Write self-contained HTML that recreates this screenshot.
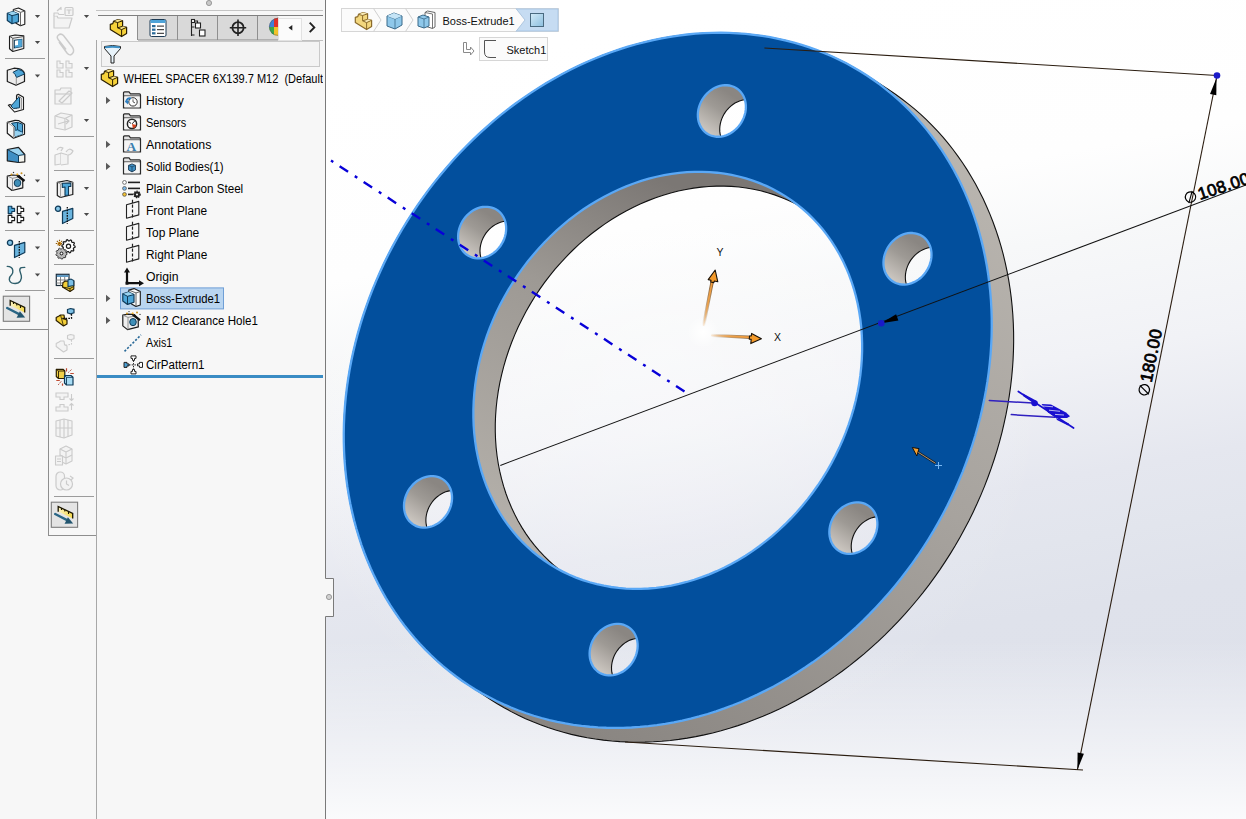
<!DOCTYPE html>
<html><head><meta charset="utf-8"><style>
html,body{margin:0;padding:0;}
body{width:1246px;height:819px;overflow:hidden;position:relative;background:#f7f7f7;font-family:"Liberation Sans",sans-serif;}
svg{position:absolute;left:0;top:0;}
</style></head><body>
<svg width="1246" height="819">
<defs>
<linearGradient id="bg0" gradientUnits="userSpaceOnUse" x1="786.0" y1="0.0" x2="942.3" y2="886.3"><stop offset="0" stop-color="#ffffff"/><stop offset="0.22" stop-color="#fefefe"/><stop offset="0.315" stop-color="#f7f8f9"/><stop offset="0.445" stop-color="#f1f2f6"/><stop offset="0.575" stop-color="#e5e7ef"/><stop offset="0.645" stop-color="#e2e5ed"/><stop offset="0.72" stop-color="#dfe2eb"/><stop offset="1" stop-color="#dde0ea"/></linearGradient>
<linearGradient id="bg1" gradientUnits="userSpaceOnUse" x1="0" y1="640" x2="0" y2="819"><stop offset="0" stop-color="#ffffff" stop-opacity="0"/><stop offset="1" stop-color="#ffffff" stop-opacity="0.85"/></linearGradient>
<radialGradient id="bg2" gradientUnits="userSpaceOnUse" cx="660" cy="370" r="400"><stop offset="0" stop-color="#ffffff" stop-opacity="0.42"/><stop offset="0.5" stop-color="#ffffff" stop-opacity="0.2"/><stop offset="1" stop-color="#ffffff" stop-opacity="0"/></radialGradient>
<pattern id="bg" patternUnits="userSpaceOnUse" x="0" y="0" width="1246" height="819"><rect width="1246" height="819" fill="url(#bg0)"/><rect width="1246" height="819" fill="url(#bg1)"/><rect width="1246" height="819" fill="url(#bg2)"/></pattern>
<linearGradient id="rim" gradientUnits="userSpaceOnUse" x1="1000" y1="100" x2="600" y2="740"><stop offset="0" stop-color="#bdb9b3"/><stop offset="0.5" stop-color="#a7a39e"/><stop offset="1" stop-color="#8a8682"/></linearGradient>
<linearGradient id="bore" gradientUnits="userSpaceOnUse" x1="640" y1="170" x2="470" y2="540"><stop offset="0" stop-color="#7b7774"/><stop offset="0.35" stop-color="#9d9994"/><stop offset="1" stop-color="#b6b2ac"/></linearGradient>
<clipPath id="vp"><rect x="326" y="0" width="920" height="819"/></clipPath>
<clipPath id="cin"><path d="M709.59,172.11 L717.01,172.73 L724.35,173.67 L731.61,174.93 L738.77,176.50 L745.82,178.39 L752.75,180.59 L759.55,183.10 L766.21,185.91 L772.71,189.03 L779.06,192.44 L785.23,196.13 L791.22,200.12 L797.02,204.37 L802.62,208.91 L808.01,213.70 L813.19,218.75 L818.14,224.05 L822.86,229.60 L827.34,235.37 L831.58,241.37 L835.56,247.58 L839.28,254.00 L842.74,260.61 L845.93,267.41 L848.85,274.38 L851.48,281.51 L853.84,288.80 L855.90,296.23 L857.68,303.79 L859.16,311.46 L860.35,319.24 L861.24,327.12 L861.83,335.08 L862.12,343.10 L862.12,351.19 L861.81,359.32 L861.20,367.48 L860.30,375.66 L859.10,383.85 L857.60,392.04 L855.81,400.20 L853.73,408.34 L851.37,416.43 L848.72,424.46 L845.79,432.43 L842.59,440.32 L839.12,448.12 L835.38,455.81 L831.39,463.38 L827.14,470.83 L822.65,478.14 L817.92,485.29 L812.95,492.29 L807.77,499.11 L802.36,505.75 L796.75,512.19 L790.94,518.43 L784.94,524.46 L778.76,530.27 L772.41,535.84 L765.90,541.18 L759.24,546.27 L752.43,551.10 L745.49,555.67 L738.44,559.97 L731.28,563.99 L724.01,567.72 L716.66,571.17 L709.24,574.33 L701.75,577.18 L694.21,579.74 L686.63,581.98 L679.02,583.91 L671.39,585.53 L663.76,586.84 L656.13,587.82 L648.52,588.49 L640.94,588.83 L633.40,588.85 L625.91,588.55 L618.49,587.93 L611.15,586.99 L603.89,585.73 L596.73,584.16 L589.68,582.27 L582.75,580.07 L575.95,577.56 L569.29,574.75 L562.79,571.63 L556.44,568.22 L550.27,564.53 L544.28,560.54 L538.48,556.29 L532.88,551.75 L527.49,546.96 L522.31,541.91 L517.36,536.61 L512.64,531.06 L508.16,525.29 L503.92,519.29 L499.94,513.08 L496.22,506.66 L492.76,500.05 L489.57,493.25 L486.65,486.28 L484.02,479.15 L481.66,471.86 L479.60,464.43 L477.82,456.87 L476.34,449.20 L475.15,441.42 L474.26,433.54 L473.67,425.58 L473.38,417.56 L473.38,409.47 L473.69,401.34 L474.30,393.18 L475.20,385.00 L476.40,376.81 L477.90,368.62 L479.69,360.46 L481.77,352.32 L484.13,344.23 L486.78,336.20 L489.71,328.23 L492.91,320.34 L496.38,312.54 L500.12,304.85 L504.11,297.28 L508.36,289.83 L512.85,282.52 L517.58,275.37 L522.55,268.37 L527.73,261.55 L533.14,254.91 L538.75,248.47 L544.56,242.23 L550.56,236.20 L556.74,230.39 L563.09,224.82 L569.60,219.48 L576.26,214.39 L583.07,209.56 L590.01,204.99 L597.06,200.69 L604.22,196.67 L611.49,192.94 L618.84,189.49 L626.26,186.33 L633.75,183.48 L641.29,180.92 L648.87,178.68 L656.48,176.75 L664.11,175.13 L671.74,173.82 L679.37,172.84 L686.98,172.17 L694.56,171.83 L702.10,171.81Z"/></clipPath>
<clipPath id="ch0"><path d="M727.04,85.24 L729.32,85.50 L731.52,86.02 L733.63,86.77 L735.63,87.75 L737.50,88.96 L739.21,90.38 L740.76,92.00 L742.13,93.80 L743.30,95.77 L744.26,97.89 L745.01,100.13 L745.54,102.47 L745.84,104.90 L745.90,107.38 L745.74,109.91 L745.34,112.44 L744.72,114.95 L743.88,117.43 L742.83,119.85 L741.58,122.18 L740.13,124.40 L738.51,126.50 L736.73,128.44 L734.81,130.22 L732.76,131.81 L730.61,133.20 L728.37,134.38 L726.07,135.33 L723.73,136.05 L721.37,136.53 L719.02,136.76 L716.69,136.74 L714.42,136.47 L712.21,135.96 L710.10,135.21 L708.10,134.22 L706.24,133.02 L704.52,131.59 L702.97,129.98 L701.61,128.17 L700.44,126.21 L699.47,124.09 L698.72,121.85 L698.20,119.51 L697.90,117.08 L697.83,114.59 L697.99,112.07 L698.39,109.54 L699.01,107.02 L699.85,104.55 L700.90,102.13 L702.16,99.80 L703.60,97.57 L705.22,95.48 L707.00,93.53 L708.92,91.76 L710.97,90.16 L713.12,88.77 L715.36,87.60 L717.66,86.64 L720.00,85.93 L722.36,85.45 L724.71,85.22Z"/></clipPath>
<linearGradient id="hg0" gradientUnits="userSpaceOnUse" x1="725.9" y1="91.0" x2="701.9" y2="127.0"><stop offset="0" stop-color="#8a8682"/><stop offset="0.45" stop-color="#9e9a95"/><stop offset="1" stop-color="#c9c4be"/></linearGradient>
<clipPath id="ch1"><path d="M912.66,233.02 L914.93,233.29 L917.14,233.80 L919.25,234.55 L921.25,235.54 L923.11,236.74 L924.83,238.17 L926.38,239.78 L927.74,241.59 L928.91,243.55 L929.88,245.67 L930.63,247.91 L931.15,250.25 L931.45,252.68 L931.52,255.17 L931.36,257.69 L930.96,260.22 L930.34,262.74 L929.50,265.22 L928.45,267.63 L927.19,269.96 L925.75,272.19 L924.13,274.28 L922.35,276.23 L920.43,278.00 L918.38,279.60 L916.23,280.99 L913.99,282.16 L911.69,283.12 L909.35,283.83 L906.99,284.31 L904.64,284.54 L902.31,284.52 L900.03,284.26 L897.83,283.74 L895.72,282.99 L893.72,282.01 L891.85,280.80 L890.14,279.38 L888.59,277.76 L887.22,275.96 L886.05,273.99 L885.09,271.87 L884.34,269.63 L883.81,267.29 L883.51,264.86 L883.45,262.38 L883.61,259.86 L884.01,257.32 L884.63,254.81 L885.47,252.33 L886.52,249.91 L887.77,247.58 L889.22,245.36 L890.84,243.26 L892.62,241.32 L894.54,239.54 L896.59,237.95 L898.74,236.56 L900.98,235.38 L903.28,234.43 L905.62,233.71 L907.98,233.23 L910.33,233.00Z"/></clipPath>
<linearGradient id="hg1" gradientUnits="userSpaceOnUse" x1="911.5" y1="238.8" x2="887.5" y2="274.8"><stop offset="0" stop-color="#8a8682"/><stop offset="0.45" stop-color="#9e9a95"/><stop offset="1" stop-color="#c9c4be"/></linearGradient>
<clipPath id="ch2"><path d="M858.54,502.36 L860.82,502.63 L863.02,503.14 L865.13,503.89 L867.13,504.88 L869.00,506.09 L870.71,507.51 L872.26,509.13 L873.63,510.93 L874.80,512.90 L875.76,515.01 L876.51,517.25 L877.04,519.60 L877.34,522.02 L877.40,524.51 L877.24,527.03 L876.84,529.56 L876.22,532.08 L875.38,534.56 L874.33,536.97 L873.08,539.30 L871.63,541.53 L870.01,543.62 L868.23,545.57 L866.31,547.35 L864.26,548.94 L862.11,550.33 L859.87,551.51 L857.57,552.46 L855.23,553.18 L852.87,553.65 L850.52,553.88 L848.19,553.86 L845.92,553.60 L843.71,553.09 L841.60,552.33 L839.60,551.35 L837.74,550.14 L836.02,548.72 L834.47,547.10 L833.11,545.30 L831.94,543.33 L830.97,541.22 L830.22,538.98 L829.70,536.63 L829.40,534.20 L829.33,531.72 L829.49,529.20 L829.89,526.67 L830.51,524.15 L831.35,521.67 L832.40,519.25 L833.66,516.92 L835.10,514.70 L836.72,512.60 L838.50,510.66 L840.42,508.88 L842.47,507.29 L844.62,505.90 L846.86,504.72 L849.16,503.77 L851.50,503.05 L853.86,502.58 L856.21,502.35Z"/></clipPath>
<linearGradient id="hg2" gradientUnits="userSpaceOnUse" x1="857.4" y1="508.1" x2="833.4" y2="544.1"><stop offset="0" stop-color="#8a8682"/><stop offset="0.45" stop-color="#9e9a95"/><stop offset="1" stop-color="#c9c4be"/></linearGradient>
<clipPath id="ch3"><path d="M618.81,623.92 L621.08,624.19 L623.29,624.70 L625.40,625.45 L627.40,626.44 L629.26,627.64 L630.98,629.07 L632.53,630.68 L633.89,632.49 L635.06,634.45 L636.03,636.57 L636.78,638.81 L637.30,641.15 L637.60,643.58 L637.67,646.07 L637.51,648.59 L637.11,651.12 L636.49,653.64 L635.65,656.11 L634.60,658.53 L633.34,660.86 L631.90,663.09 L630.28,665.18 L628.50,667.13 L626.58,668.90 L624.53,670.50 L622.38,671.89 L620.14,673.06 L617.84,674.02 L615.50,674.73 L613.14,675.21 L610.79,675.44 L608.46,675.42 L606.18,675.16 L603.98,674.64 L601.87,673.89 L599.87,672.91 L598.00,671.70 L596.29,670.28 L594.74,668.66 L593.37,666.86 L592.20,664.89 L591.24,662.77 L590.49,660.53 L589.96,658.19 L589.66,655.76 L589.60,653.28 L589.76,650.75 L590.16,648.22 L590.78,645.71 L591.62,643.23 L592.67,640.81 L593.92,638.48 L595.37,636.26 L596.99,634.16 L598.77,632.22 L600.69,630.44 L602.74,628.85 L604.89,627.46 L607.13,626.28 L609.43,625.33 L611.77,624.61 L614.13,624.13 L616.48,623.90Z"/></clipPath>
<linearGradient id="hg3" gradientUnits="userSpaceOnUse" x1="617.6" y1="629.7" x2="593.6" y2="665.7"><stop offset="0" stop-color="#8a8682"/><stop offset="0.45" stop-color="#9e9a95"/><stop offset="1" stop-color="#c9c4be"/></linearGradient>
<clipPath id="ch4"><path d="M433.19,476.14 L435.47,476.40 L437.67,476.92 L439.78,477.67 L441.78,478.65 L443.65,479.86 L445.36,481.28 L446.91,482.90 L448.28,484.70 L449.45,486.67 L450.41,488.79 L451.16,491.03 L451.69,493.37 L451.99,495.80 L452.05,498.28 L451.89,500.80 L451.49,503.34 L450.87,505.85 L450.03,508.33 L448.98,510.75 L447.73,513.08 L446.28,515.30 L444.66,517.40 L442.88,519.34 L440.96,521.12 L438.91,522.71 L436.76,524.10 L434.52,525.28 L432.22,526.23 L429.88,526.95 L427.52,527.43 L425.17,527.66 L422.84,527.64 L420.57,527.37 L418.36,526.86 L416.25,526.11 L414.25,525.12 L412.39,523.92 L410.67,522.49 L409.12,520.88 L407.76,519.07 L406.59,517.11 L405.62,514.99 L404.87,512.75 L404.35,510.41 L404.05,507.98 L403.98,505.49 L404.14,502.97 L404.54,500.44 L405.16,497.92 L406.00,495.44 L407.05,493.03 L408.31,490.70 L409.75,488.47 L411.37,486.38 L413.15,484.43 L415.07,482.66 L417.12,481.06 L419.27,479.67 L421.51,478.50 L423.81,477.54 L426.15,476.83 L428.51,476.35 L430.86,476.12Z"/></clipPath>
<linearGradient id="hg4" gradientUnits="userSpaceOnUse" x1="432.0" y1="481.9" x2="408.0" y2="517.9"><stop offset="0" stop-color="#8a8682"/><stop offset="0.45" stop-color="#9e9a95"/><stop offset="1" stop-color="#c9c4be"/></linearGradient>
<clipPath id="ch5"><path d="M487.31,206.80 L489.58,207.06 L491.79,207.57 L493.90,208.33 L495.90,209.31 L497.76,210.52 L499.48,211.94 L501.03,213.56 L502.39,215.36 L503.56,217.33 L504.53,219.44 L505.28,221.68 L505.80,224.03 L506.10,226.46 L506.17,228.94 L506.01,231.46 L505.61,233.99 L504.99,236.51 L504.15,238.99 L503.10,241.41 L501.84,243.74 L500.40,245.96 L498.78,248.06 L497.00,250.00 L495.08,251.78 L493.03,253.37 L490.88,254.76 L488.64,255.94 L486.34,256.89 L484.00,257.61 L481.64,258.08 L479.29,258.31 L476.96,258.30 L474.68,258.03 L472.48,257.52 L470.37,256.77 L468.37,255.78 L466.50,254.57 L464.79,253.15 L463.24,251.53 L461.87,249.73 L460.70,247.76 L459.74,245.65 L458.99,243.41 L458.46,241.06 L458.16,238.64 L458.10,236.15 L458.26,233.63 L458.66,231.10 L459.28,228.58 L460.12,226.10 L461.17,223.69 L462.42,221.36 L463.87,219.13 L465.49,217.04 L467.27,215.09 L469.19,213.31 L471.24,211.72 L473.39,210.33 L475.63,209.15 L477.93,208.20 L480.27,207.48 L482.63,207.01 L484.98,206.78Z"/></clipPath>
<linearGradient id="hg5" gradientUnits="userSpaceOnUse" x1="486.1" y1="212.5" x2="462.1" y2="248.5"><stop offset="0" stop-color="#8a8682"/><stop offset="0.45" stop-color="#9e9a95"/><stop offset="1" stop-color="#c9c4be"/></linearGradient>
</defs>
<g clip-path="url(#vp)">
<rect x="326" y="0" width="920" height="819" fill="url(#bg)"/>
<path d="M343.75,433.40 L343.92,424.39 L344.32,415.35 L344.94,406.29 L345.78,397.20 L346.84,388.11 L348.12,379.01 L349.61,369.91 L351.33,360.82 L353.27,351.74 L355.41,342.69 L357.78,333.65 L360.35,324.65 L363.14,315.69 L366.13,306.77 L369.34,297.90 L372.74,289.09 L376.35,280.35 L380.16,271.67 L384.17,263.06 L388.37,254.53 L392.76,246.10 L397.34,237.75 L402.10,229.50 L407.05,221.35 L412.17,213.32 L417.47,205.39 L422.95,197.59 L428.59,189.91 L434.39,182.37 L440.36,174.96 L446.48,167.69 L452.75,160.56 L459.17,153.59 L465.73,146.77 L472.43,140.11 L479.26,133.62 L486.23,127.29 L493.31,121.14 L500.52,115.17 L507.84,109.38 L515.27,103.77 L522.81,98.35 L530.45,93.13 L538.18,88.10 L545.99,83.28 L553.89,78.65 L561.87,74.24 L569.93,70.03 L578.05,66.04 L586.23,62.26 L594.46,58.70 L602.75,55.36 L611.08,52.24 L619.45,49.35 L627.86,46.68 L636.29,44.25 L644.74,42.04 L653.21,40.07 L661.68,38.32 L670.17,36.82 L678.65,35.55 L687.12,34.51 L695.58,33.71 L704.02,33.15 L712.44,32.83 L720.82,32.74 L729.17,32.90 L737.48,33.29 L745.74,33.92 L753.94,34.79 L762.09,35.89 L770.17,37.23 L778.18,38.81 L786.12,40.61 L793.97,42.66 L801.74,44.93 L809.42,47.43 L817.00,50.16 L824.47,53.12 L831.84,56.30 L839.10,59.71 L846.24,63.33 L853.26,67.17 L860.15,71.23 L866.91,75.50 L888.81,89.80 L895.43,94.27 L901.91,98.95 L908.25,103.84 L914.43,108.92 L920.46,114.20 L926.34,119.68 L932.05,125.34 L937.59,131.18 L942.97,137.21 L948.17,143.41 L953.19,149.78 L958.04,156.33 L962.70,163.03 L967.17,169.89 L971.45,176.91 L975.54,184.08 L979.43,191.39 L983.13,198.84 L986.62,206.43 L989.91,214.14 L993.00,221.98 L995.87,229.94 L998.54,238.01 L1001.00,246.18 L1003.24,254.46 L1005.26,262.83 L1007.07,271.30 L1008.67,279.85 L1010.04,288.48 L1011.19,297.18 L1012.13,305.94 L1012.84,314.77 L1013.33,323.65 L1013.60,332.58 L1013.65,341.56 L1013.48,350.57 L1013.08,359.61 L1012.46,368.67 L1011.62,377.76 L1010.56,386.85 L1009.28,395.95 L1007.79,405.05 L1006.07,414.14 L1004.13,423.22 L1001.99,432.27 L999.62,441.31 L997.05,450.31 L994.26,459.27 L991.27,468.19 L988.06,477.06 L984.66,485.87 L981.05,494.61 L977.24,503.29 L973.23,511.90 L969.03,520.43 L964.64,528.86 L960.06,537.21 L955.30,545.46 L950.35,553.61 L945.23,561.64 L939.93,569.57 L934.45,577.37 L928.81,585.05 L923.01,592.59 L917.04,600.00 L910.92,607.27 L904.65,614.40 L898.23,621.37 L891.67,628.19 L884.97,634.85 L878.14,641.34 L871.17,647.67 L864.09,653.82 L856.88,659.79 L849.56,665.58 L842.13,671.19 L834.59,676.61 L826.95,681.83 L819.22,686.86 L811.41,691.68 L803.51,696.31 L795.53,700.72 L787.47,704.93 L779.35,708.92 L771.17,712.70 L762.94,716.26 L754.65,719.60 L746.32,722.72 L737.95,725.61 L729.54,728.28 L721.11,730.71 L712.66,732.92 L704.19,734.89 L695.72,736.64 L687.23,738.14 L678.75,739.41 L670.28,740.45 L661.82,741.25 L653.38,741.81 L644.96,742.13 L636.58,742.22 L628.23,742.06 L619.92,741.67 L611.66,741.04 L603.46,740.17 L595.31,739.07 L587.23,737.73 L579.22,736.15 L571.28,734.35 L563.43,732.30 L555.66,730.03 L547.98,727.53 L540.40,724.80 L532.93,721.84 L525.56,718.66 L518.30,715.25 L511.16,711.63 L504.14,707.79 L497.25,703.73 L490.49,699.46 L468.59,685.16 L461.97,680.69 L455.49,676.01 L449.15,671.12 L442.97,666.04 L436.94,660.76 L431.06,655.28 L425.35,649.62 L419.81,643.78 L414.43,637.75 L409.23,631.55 L404.21,625.18 L399.36,618.63 L394.70,611.93 L390.23,605.07 L385.95,598.05 L381.86,590.88 L377.97,583.57 L374.27,576.12 L370.78,568.53 L367.49,560.82 L364.40,552.98 L361.53,545.02 L358.86,536.95 L356.40,528.78 L354.16,520.50 L352.14,512.13 L350.33,503.66 L348.73,495.11 L347.36,486.48 L346.21,477.78 L345.27,469.02 L344.56,460.19 L344.07,451.31 L343.80,442.38Z" fill="url(#rim)" stroke="#111" stroke-width="1.1"/>
<path d="M737.48,33.29 L745.74,33.92 L753.94,34.79 L762.09,35.89 L770.17,37.23 L778.18,38.81 L786.12,40.61 L793.97,42.66 L801.74,44.93 L809.42,47.43 L817.00,50.16 L824.47,53.12 L831.84,56.30 L839.10,59.71 L846.24,63.33 L853.26,67.17 L860.15,71.23 L866.91,75.50 L873.53,79.97 L880.01,84.65 L886.35,89.54 L892.53,94.62 L898.56,99.90 L904.44,105.38 L910.15,111.04 L915.69,116.88 L921.07,122.91 L926.27,129.11 L931.29,135.48 L936.14,142.03 L940.80,148.73 L945.27,155.59 L949.55,162.61 L953.64,169.78 L957.53,177.09 L961.23,184.54 L964.72,192.13 L968.01,199.84 L971.10,207.68 L973.97,215.64 L976.64,223.71 L979.10,231.88 L981.34,240.16 L983.36,248.53 L985.17,257.00 L986.77,265.55 L988.14,274.18 L989.29,282.88 L990.23,291.64 L990.94,300.47 L991.43,309.35 L991.70,318.28 L991.75,327.26 L991.58,336.27 L991.18,345.31 L990.56,354.37 L989.72,363.46 L988.66,372.55 L987.38,381.65 L985.89,390.75 L984.17,399.84 L982.23,408.92 L980.09,417.97 L977.72,427.01 L975.15,436.01 L972.36,444.97 L969.37,453.89 L966.16,462.76 L962.76,471.57 L959.15,480.31 L955.34,488.99 L951.33,497.60 L947.13,506.13 L942.74,514.56 L938.16,522.91 L933.40,531.16 L928.45,539.31 L923.33,547.34 L918.03,555.27 L912.55,563.07 L906.91,570.75 L901.11,578.29 L895.14,585.70 L889.02,592.97 L882.75,600.10 L876.33,607.07 L869.77,613.89 L863.07,620.55 L856.24,627.04 L849.27,633.37 L842.19,639.52 L834.98,645.49 L827.66,651.28 L820.23,656.89 L812.69,662.31 L805.05,667.53 L797.32,672.56 L789.51,677.38 L781.61,682.01 L773.63,686.42 L765.57,690.63 L757.45,694.62 L749.27,698.40 L741.04,701.96 L732.75,705.30 L724.42,708.42 L716.05,711.31 L707.64,713.98 L699.21,716.41 L690.76,718.62 L682.29,720.59 L673.82,722.34 L665.33,723.84 L656.85,725.11 L648.38,726.15 L639.92,726.95 L631.48,727.51 L623.06,727.83 L614.68,727.92 L606.33,727.76 L598.02,727.37 L589.76,726.74 L581.56,725.87 L573.41,724.77 L565.33,723.43 L557.32,721.85 L549.38,720.05 L541.53,718.00 L533.76,715.73 L526.08,713.23 L518.50,710.50 L511.03,707.54 L503.66,704.36 L496.40,700.95 L489.26,697.33 L482.24,693.49 L475.35,689.43 L468.59,685.16 L461.97,680.69 L455.49,676.01 L449.15,671.12 L442.97,666.04 L436.94,660.76 L431.06,655.28 L425.35,649.62 L419.81,643.78 L414.43,637.75 L409.23,631.55 L404.21,625.18 L399.36,618.63 L394.70,611.93 L390.23,605.07 L385.95,598.05 L381.86,590.88 L377.97,583.57 L374.27,576.12 L370.78,568.53 L367.49,560.82 L364.40,552.98 L361.53,545.02 L358.86,536.95 L356.40,528.78 L354.16,520.50 L352.14,512.13 L350.33,503.66 L348.73,495.11 L347.36,486.48 L346.21,477.78 L345.27,469.02 L344.56,460.19 L344.07,451.31 L343.80,442.38 L343.75,433.40 L343.92,424.39 L344.32,415.35 L344.94,406.29 L345.78,397.20 L346.84,388.11 L348.12,379.01 L349.61,369.91 L351.33,360.82 L353.27,351.74 L355.41,342.69 L357.78,333.65 L360.35,324.65 L363.14,315.69 L366.13,306.77 L369.34,297.90 L372.74,289.09 L376.35,280.35 L380.16,271.67 L384.17,263.06 L388.37,254.53 L392.76,246.10 L397.34,237.75 L402.10,229.50 L407.05,221.35 L412.17,213.32 L417.47,205.39 L422.95,197.59 L428.59,189.91 L434.39,182.37 L440.36,174.96 L446.48,167.69 L452.75,160.56 L459.17,153.59 L465.73,146.77 L472.43,140.11 L479.26,133.62 L486.23,127.29 L493.31,121.14 L500.52,115.17 L507.84,109.38 L515.27,103.77 L522.81,98.35 L530.45,93.13 L538.18,88.10 L545.99,83.28 L553.89,78.65 L561.87,74.24 L569.93,70.03 L578.05,66.04 L586.23,62.26 L594.46,58.70 L602.75,55.36 L611.08,52.24 L619.45,49.35 L627.86,46.68 L636.29,44.25 L644.74,42.04 L653.21,40.07 L661.68,38.32 L670.17,36.82 L678.65,35.55 L687.12,34.51 L695.58,33.71 L704.02,33.15 L712.44,32.83 L720.82,32.74 L729.17,32.90ZM709.59,172.11 L717.01,172.73 L724.35,173.67 L731.61,174.93 L738.77,176.50 L745.82,178.39 L752.75,180.59 L759.55,183.10 L766.21,185.91 L772.71,189.03 L779.06,192.44 L785.23,196.13 L791.22,200.12 L797.02,204.37 L802.62,208.91 L808.01,213.70 L813.19,218.75 L818.14,224.05 L822.86,229.60 L827.34,235.37 L831.58,241.37 L835.56,247.58 L839.28,254.00 L842.74,260.61 L845.93,267.41 L848.85,274.38 L851.48,281.51 L853.84,288.80 L855.90,296.23 L857.68,303.79 L859.16,311.46 L860.35,319.24 L861.24,327.12 L861.83,335.08 L862.12,343.10 L862.12,351.19 L861.81,359.32 L861.20,367.48 L860.30,375.66 L859.10,383.85 L857.60,392.04 L855.81,400.20 L853.73,408.34 L851.37,416.43 L848.72,424.46 L845.79,432.43 L842.59,440.32 L839.12,448.12 L835.38,455.81 L831.39,463.38 L827.14,470.83 L822.65,478.14 L817.92,485.29 L812.95,492.29 L807.77,499.11 L802.36,505.75 L796.75,512.19 L790.94,518.43 L784.94,524.46 L778.76,530.27 L772.41,535.84 L765.90,541.18 L759.24,546.27 L752.43,551.10 L745.49,555.67 L738.44,559.97 L731.28,563.99 L724.01,567.72 L716.66,571.17 L709.24,574.33 L701.75,577.18 L694.21,579.74 L686.63,581.98 L679.02,583.91 L671.39,585.53 L663.76,586.84 L656.13,587.82 L648.52,588.49 L640.94,588.83 L633.40,588.85 L625.91,588.55 L618.49,587.93 L611.15,586.99 L603.89,585.73 L596.73,584.16 L589.68,582.27 L582.75,580.07 L575.95,577.56 L569.29,574.75 L562.79,571.63 L556.44,568.22 L550.27,564.53 L544.28,560.54 L538.48,556.29 L532.88,551.75 L527.49,546.96 L522.31,541.91 L517.36,536.61 L512.64,531.06 L508.16,525.29 L503.92,519.29 L499.94,513.08 L496.22,506.66 L492.76,500.05 L489.57,493.25 L486.65,486.28 L484.02,479.15 L481.66,471.86 L479.60,464.43 L477.82,456.87 L476.34,449.20 L475.15,441.42 L474.26,433.54 L473.67,425.58 L473.38,417.56 L473.38,409.47 L473.69,401.34 L474.30,393.18 L475.20,385.00 L476.40,376.81 L477.90,368.62 L479.69,360.46 L481.77,352.32 L484.13,344.23 L486.78,336.20 L489.71,328.23 L492.91,320.34 L496.38,312.54 L500.12,304.85 L504.11,297.28 L508.36,289.83 L512.85,282.52 L517.58,275.37 L522.55,268.37 L527.73,261.55 L533.14,254.91 L538.75,248.47 L544.56,242.23 L550.56,236.20 L556.74,230.39 L563.09,224.82 L569.60,219.48 L576.26,214.39 L583.07,209.56 L590.01,204.99 L597.06,200.69 L604.22,196.67 L611.49,192.94 L618.84,189.49 L626.26,186.33 L633.75,183.48 L641.29,180.92 L648.87,178.68 L656.48,176.75 L664.11,175.13 L671.74,173.82 L679.37,172.84 L686.98,172.17 L694.56,171.83 L702.10,171.81ZM727.04,85.24 L729.32,85.50 L731.52,86.02 L733.63,86.77 L735.63,87.75 L737.50,88.96 L739.21,90.38 L740.76,92.00 L742.13,93.80 L743.30,95.77 L744.26,97.89 L745.01,100.13 L745.54,102.47 L745.84,104.90 L745.90,107.38 L745.74,109.91 L745.34,112.44 L744.72,114.95 L743.88,117.43 L742.83,119.85 L741.58,122.18 L740.13,124.40 L738.51,126.50 L736.73,128.44 L734.81,130.22 L732.76,131.81 L730.61,133.20 L728.37,134.38 L726.07,135.33 L723.73,136.05 L721.37,136.53 L719.02,136.76 L716.69,136.74 L714.42,136.47 L712.21,135.96 L710.10,135.21 L708.10,134.22 L706.24,133.02 L704.52,131.59 L702.97,129.98 L701.61,128.17 L700.44,126.21 L699.47,124.09 L698.72,121.85 L698.20,119.51 L697.90,117.08 L697.83,114.59 L697.99,112.07 L698.39,109.54 L699.01,107.02 L699.85,104.55 L700.90,102.13 L702.16,99.80 L703.60,97.57 L705.22,95.48 L707.00,93.53 L708.92,91.76 L710.97,90.16 L713.12,88.77 L715.36,87.60 L717.66,86.64 L720.00,85.93 L722.36,85.45 L724.71,85.22ZM912.66,233.02 L914.93,233.29 L917.14,233.80 L919.25,234.55 L921.25,235.54 L923.11,236.74 L924.83,238.17 L926.38,239.78 L927.74,241.59 L928.91,243.55 L929.88,245.67 L930.63,247.91 L931.15,250.25 L931.45,252.68 L931.52,255.17 L931.36,257.69 L930.96,260.22 L930.34,262.74 L929.50,265.22 L928.45,267.63 L927.19,269.96 L925.75,272.19 L924.13,274.28 L922.35,276.23 L920.43,278.00 L918.38,279.60 L916.23,280.99 L913.99,282.16 L911.69,283.12 L909.35,283.83 L906.99,284.31 L904.64,284.54 L902.31,284.52 L900.03,284.26 L897.83,283.74 L895.72,282.99 L893.72,282.01 L891.85,280.80 L890.14,279.38 L888.59,277.76 L887.22,275.96 L886.05,273.99 L885.09,271.87 L884.34,269.63 L883.81,267.29 L883.51,264.86 L883.45,262.38 L883.61,259.86 L884.01,257.32 L884.63,254.81 L885.47,252.33 L886.52,249.91 L887.77,247.58 L889.22,245.36 L890.84,243.26 L892.62,241.32 L894.54,239.54 L896.59,237.95 L898.74,236.56 L900.98,235.38 L903.28,234.43 L905.62,233.71 L907.98,233.23 L910.33,233.00ZM858.54,502.36 L860.82,502.63 L863.02,503.14 L865.13,503.89 L867.13,504.88 L869.00,506.09 L870.71,507.51 L872.26,509.13 L873.63,510.93 L874.80,512.90 L875.76,515.01 L876.51,517.25 L877.04,519.60 L877.34,522.02 L877.40,524.51 L877.24,527.03 L876.84,529.56 L876.22,532.08 L875.38,534.56 L874.33,536.97 L873.08,539.30 L871.63,541.53 L870.01,543.62 L868.23,545.57 L866.31,547.35 L864.26,548.94 L862.11,550.33 L859.87,551.51 L857.57,552.46 L855.23,553.18 L852.87,553.65 L850.52,553.88 L848.19,553.86 L845.92,553.60 L843.71,553.09 L841.60,552.33 L839.60,551.35 L837.74,550.14 L836.02,548.72 L834.47,547.10 L833.11,545.30 L831.94,543.33 L830.97,541.22 L830.22,538.98 L829.70,536.63 L829.40,534.20 L829.33,531.72 L829.49,529.20 L829.89,526.67 L830.51,524.15 L831.35,521.67 L832.40,519.25 L833.66,516.92 L835.10,514.70 L836.72,512.60 L838.50,510.66 L840.42,508.88 L842.47,507.29 L844.62,505.90 L846.86,504.72 L849.16,503.77 L851.50,503.05 L853.86,502.58 L856.21,502.35ZM618.81,623.92 L621.08,624.19 L623.29,624.70 L625.40,625.45 L627.40,626.44 L629.26,627.64 L630.98,629.07 L632.53,630.68 L633.89,632.49 L635.06,634.45 L636.03,636.57 L636.78,638.81 L637.30,641.15 L637.60,643.58 L637.67,646.07 L637.51,648.59 L637.11,651.12 L636.49,653.64 L635.65,656.11 L634.60,658.53 L633.34,660.86 L631.90,663.09 L630.28,665.18 L628.50,667.13 L626.58,668.90 L624.53,670.50 L622.38,671.89 L620.14,673.06 L617.84,674.02 L615.50,674.73 L613.14,675.21 L610.79,675.44 L608.46,675.42 L606.18,675.16 L603.98,674.64 L601.87,673.89 L599.87,672.91 L598.00,671.70 L596.29,670.28 L594.74,668.66 L593.37,666.86 L592.20,664.89 L591.24,662.77 L590.49,660.53 L589.96,658.19 L589.66,655.76 L589.60,653.28 L589.76,650.75 L590.16,648.22 L590.78,645.71 L591.62,643.23 L592.67,640.81 L593.92,638.48 L595.37,636.26 L596.99,634.16 L598.77,632.22 L600.69,630.44 L602.74,628.85 L604.89,627.46 L607.13,626.28 L609.43,625.33 L611.77,624.61 L614.13,624.13 L616.48,623.90ZM433.19,476.14 L435.47,476.40 L437.67,476.92 L439.78,477.67 L441.78,478.65 L443.65,479.86 L445.36,481.28 L446.91,482.90 L448.28,484.70 L449.45,486.67 L450.41,488.79 L451.16,491.03 L451.69,493.37 L451.99,495.80 L452.05,498.28 L451.89,500.80 L451.49,503.34 L450.87,505.85 L450.03,508.33 L448.98,510.75 L447.73,513.08 L446.28,515.30 L444.66,517.40 L442.88,519.34 L440.96,521.12 L438.91,522.71 L436.76,524.10 L434.52,525.28 L432.22,526.23 L429.88,526.95 L427.52,527.43 L425.17,527.66 L422.84,527.64 L420.57,527.37 L418.36,526.86 L416.25,526.11 L414.25,525.12 L412.39,523.92 L410.67,522.49 L409.12,520.88 L407.76,519.07 L406.59,517.11 L405.62,514.99 L404.87,512.75 L404.35,510.41 L404.05,507.98 L403.98,505.49 L404.14,502.97 L404.54,500.44 L405.16,497.92 L406.00,495.44 L407.05,493.03 L408.31,490.70 L409.75,488.47 L411.37,486.38 L413.15,484.43 L415.07,482.66 L417.12,481.06 L419.27,479.67 L421.51,478.50 L423.81,477.54 L426.15,476.83 L428.51,476.35 L430.86,476.12ZM487.31,206.80 L489.58,207.06 L491.79,207.57 L493.90,208.33 L495.90,209.31 L497.76,210.52 L499.48,211.94 L501.03,213.56 L502.39,215.36 L503.56,217.33 L504.53,219.44 L505.28,221.68 L505.80,224.03 L506.10,226.46 L506.17,228.94 L506.01,231.46 L505.61,233.99 L504.99,236.51 L504.15,238.99 L503.10,241.41 L501.84,243.74 L500.40,245.96 L498.78,248.06 L497.00,250.00 L495.08,251.78 L493.03,253.37 L490.88,254.76 L488.64,255.94 L486.34,256.89 L484.00,257.61 L481.64,258.08 L479.29,258.31 L476.96,258.30 L474.68,258.03 L472.48,257.52 L470.37,256.77 L468.37,255.78 L466.50,254.57 L464.79,253.15 L463.24,251.53 L461.87,249.73 L460.70,247.76 L459.74,245.65 L458.99,243.41 L458.46,241.06 L458.16,238.64 L458.10,236.15 L458.26,233.63 L458.66,231.10 L459.28,228.58 L460.12,226.10 L461.17,223.69 L462.42,221.36 L463.87,219.13 L465.49,217.04 L467.27,215.09 L469.19,213.31 L471.24,211.72 L473.39,210.33 L475.63,209.15 L477.93,208.20 L480.27,207.48 L482.63,207.01 L484.98,206.78Z" fill="#024f9d" fill-rule="evenodd"/>
<g clip-path="url(#cin)"><path d="M709.59,172.11 L717.01,172.73 L724.35,173.67 L731.61,174.93 L738.77,176.50 L745.82,178.39 L752.75,180.59 L759.55,183.10 L766.21,185.91 L772.71,189.03 L779.06,192.44 L785.23,196.13 L791.22,200.12 L797.02,204.37 L802.62,208.91 L808.01,213.70 L813.19,218.75 L818.14,224.05 L822.86,229.60 L827.34,235.37 L831.58,241.37 L835.56,247.58 L839.28,254.00 L842.74,260.61 L845.93,267.41 L848.85,274.38 L851.48,281.51 L853.84,288.80 L855.90,296.23 L857.68,303.79 L859.16,311.46 L860.35,319.24 L861.24,327.12 L861.83,335.08 L862.12,343.10 L862.12,351.19 L861.81,359.32 L861.20,367.48 L860.30,375.66 L859.10,383.85 L857.60,392.04 L855.81,400.20 L853.73,408.34 L851.37,416.43 L848.72,424.46 L845.79,432.43 L842.59,440.32 L839.12,448.12 L835.38,455.81 L831.39,463.38 L827.14,470.83 L822.65,478.14 L817.92,485.29 L812.95,492.29 L807.77,499.11 L802.36,505.75 L796.75,512.19 L790.94,518.43 L784.94,524.46 L778.76,530.27 L772.41,535.84 L765.90,541.18 L759.24,546.27 L752.43,551.10 L745.49,555.67 L738.44,559.97 L731.28,563.99 L724.01,567.72 L716.66,571.17 L709.24,574.33 L701.75,577.18 L694.21,579.74 L686.63,581.98 L679.02,583.91 L671.39,585.53 L663.76,586.84 L656.13,587.82 L648.52,588.49 L640.94,588.83 L633.40,588.85 L625.91,588.55 L618.49,587.93 L611.15,586.99 L603.89,585.73 L596.73,584.16 L589.68,582.27 L582.75,580.07 L575.95,577.56 L569.29,574.75 L562.79,571.63 L556.44,568.22 L550.27,564.53 L544.28,560.54 L538.48,556.29 L532.88,551.75 L527.49,546.96 L522.31,541.91 L517.36,536.61 L512.64,531.06 L508.16,525.29 L503.92,519.29 L499.94,513.08 L496.22,506.66 L492.76,500.05 L489.57,493.25 L486.65,486.28 L484.02,479.15 L481.66,471.86 L479.60,464.43 L477.82,456.87 L476.34,449.20 L475.15,441.42 L474.26,433.54 L473.67,425.58 L473.38,417.56 L473.38,409.47 L473.69,401.34 L474.30,393.18 L475.20,385.00 L476.40,376.81 L477.90,368.62 L479.69,360.46 L481.77,352.32 L484.13,344.23 L486.78,336.20 L489.71,328.23 L492.91,320.34 L496.38,312.54 L500.12,304.85 L504.11,297.28 L508.36,289.83 L512.85,282.52 L517.58,275.37 L522.55,268.37 L527.73,261.55 L533.14,254.91 L538.75,248.47 L544.56,242.23 L550.56,236.20 L556.74,230.39 L563.09,224.82 L569.60,219.48 L576.26,214.39 L583.07,209.56 L590.01,204.99 L597.06,200.69 L604.22,196.67 L611.49,192.94 L618.84,189.49 L626.26,186.33 L633.75,183.48 L641.29,180.92 L648.87,178.68 L656.48,176.75 L664.11,175.13 L671.74,173.82 L679.37,172.84 L686.98,172.17 L694.56,171.83 L702.10,171.81Z" fill="url(#bore)"/><path d="M731.49,186.41 L738.91,187.03 L746.25,187.97 L753.51,189.23 L760.67,190.80 L767.72,192.69 L774.65,194.89 L781.45,197.40 L788.11,200.21 L794.61,203.33 L800.96,206.74 L807.13,210.43 L813.12,214.42 L818.92,218.67 L824.52,223.21 L829.91,228.00 L835.09,233.05 L840.04,238.35 L844.76,243.90 L849.24,249.67 L853.48,255.67 L857.46,261.88 L861.18,268.30 L864.64,274.91 L867.83,281.71 L870.75,288.68 L873.38,295.81 L875.74,303.10 L877.80,310.53 L879.58,318.09 L881.06,325.76 L882.25,333.54 L883.14,341.42 L883.73,349.38 L884.02,357.40 L884.02,365.49 L883.71,373.62 L883.10,381.78 L882.20,389.96 L881.00,398.15 L879.50,406.34 L877.71,414.50 L875.63,422.64 L873.27,430.73 L870.62,438.76 L867.69,446.73 L864.49,454.62 L861.02,462.42 L857.28,470.11 L853.29,477.68 L849.04,485.13 L844.55,492.44 L839.82,499.59 L834.85,506.59 L829.67,513.41 L824.26,520.05 L818.65,526.49 L812.84,532.73 L806.84,538.76 L800.66,544.57 L794.31,550.14 L787.80,555.48 L781.14,560.57 L774.33,565.40 L767.39,569.97 L760.34,574.27 L753.18,578.29 L745.91,582.02 L738.56,585.47 L731.14,588.63 L723.65,591.48 L716.11,594.04 L708.53,596.28 L700.92,598.21 L693.29,599.83 L685.66,601.14 L678.03,602.12 L670.42,602.79 L662.84,603.13 L655.30,603.15 L647.81,602.85 L640.39,602.23 L633.05,601.29 L625.79,600.03 L618.63,598.46 L611.58,596.57 L604.65,594.37 L597.85,591.86 L591.19,589.05 L584.69,585.93 L578.34,582.52 L572.17,578.83 L566.18,574.84 L560.38,570.59 L554.78,566.05 L549.39,561.26 L544.21,556.21 L539.26,550.91 L534.54,545.36 L530.06,539.59 L525.82,533.59 L521.84,527.38 L518.12,520.96 L514.66,514.35 L511.47,507.55 L508.55,500.58 L505.92,493.45 L503.56,486.16 L501.50,478.73 L499.72,471.17 L498.24,463.50 L497.05,455.72 L496.16,447.84 L495.57,439.88 L495.28,431.86 L495.28,423.77 L495.59,415.64 L496.20,407.48 L497.10,399.30 L498.30,391.11 L499.80,382.92 L501.59,374.76 L503.67,366.62 L506.03,358.53 L508.68,350.50 L511.61,342.53 L514.81,334.64 L518.28,326.84 L522.02,319.15 L526.01,311.58 L530.26,304.13 L534.75,296.82 L539.48,289.67 L544.45,282.67 L549.63,275.85 L555.04,269.21 L560.65,262.77 L566.46,256.53 L572.46,250.50 L578.64,244.69 L584.99,239.12 L591.50,233.78 L598.16,228.69 L604.97,223.86 L611.91,219.29 L618.96,214.99 L626.12,210.97 L633.39,207.24 L640.74,203.79 L648.16,200.63 L655.65,197.78 L663.19,195.22 L670.77,192.98 L678.38,191.05 L686.01,189.43 L693.64,188.12 L701.27,187.14 L708.88,186.47 L716.46,186.13 L724.00,186.11Z" fill="url(#bg)" stroke="#111" stroke-width="1.1"/></g>
<g clip-path="url(#ch0)"><path d="M727.04,85.24 L729.32,85.50 L731.52,86.02 L733.63,86.77 L735.63,87.75 L737.50,88.96 L739.21,90.38 L740.76,92.00 L742.13,93.80 L743.30,95.77 L744.26,97.89 L745.01,100.13 L745.54,102.47 L745.84,104.90 L745.90,107.38 L745.74,109.91 L745.34,112.44 L744.72,114.95 L743.88,117.43 L742.83,119.85 L741.58,122.18 L740.13,124.40 L738.51,126.50 L736.73,128.44 L734.81,130.22 L732.76,131.81 L730.61,133.20 L728.37,134.38 L726.07,135.33 L723.73,136.05 L721.37,136.53 L719.02,136.76 L716.69,136.74 L714.42,136.47 L712.21,135.96 L710.10,135.21 L708.10,134.22 L706.24,133.02 L704.52,131.59 L702.97,129.98 L701.61,128.17 L700.44,126.21 L699.47,124.09 L698.72,121.85 L698.20,119.51 L697.90,117.08 L697.83,114.59 L697.99,112.07 L698.39,109.54 L699.01,107.02 L699.85,104.55 L700.90,102.13 L702.16,99.80 L703.60,97.57 L705.22,95.48 L707.00,93.53 L708.92,91.76 L710.97,90.16 L713.12,88.77 L715.36,87.60 L717.66,86.64 L720.00,85.93 L722.36,85.45 L724.71,85.22Z" fill="url(#hg0)"/><path d="M748.94,99.54 L751.22,99.80 L753.42,100.32 L755.53,101.07 L757.53,102.05 L759.40,103.26 L761.11,104.68 L762.66,106.30 L764.03,108.10 L765.20,110.07 L766.16,112.19 L766.91,114.43 L767.44,116.77 L767.74,119.20 L767.80,121.68 L767.64,124.21 L767.24,126.74 L766.62,129.25 L765.78,131.73 L764.73,134.15 L763.48,136.48 L762.03,138.70 L760.41,140.80 L758.63,142.74 L756.71,144.52 L754.66,146.11 L752.51,147.50 L750.27,148.68 L747.97,149.63 L745.63,150.35 L743.27,150.83 L740.92,151.06 L738.59,151.04 L736.32,150.77 L734.11,150.26 L732.00,149.51 L730.00,148.52 L728.14,147.32 L726.42,145.89 L724.87,144.28 L723.51,142.47 L722.34,140.51 L721.37,138.39 L720.62,136.15 L720.10,133.81 L719.80,131.38 L719.73,128.89 L719.89,126.37 L720.29,123.84 L720.91,121.32 L721.75,118.85 L722.80,116.43 L724.06,114.10 L725.50,111.87 L727.12,109.78 L728.90,107.83 L730.82,106.06 L732.87,104.46 L735.02,103.07 L737.26,101.90 L739.56,100.94 L741.90,100.23 L744.26,99.75 L746.61,99.52Z" fill="url(#bg)" stroke="#111" stroke-width="1.1"/></g>
<g clip-path="url(#ch1)"><path d="M912.66,233.02 L914.93,233.29 L917.14,233.80 L919.25,234.55 L921.25,235.54 L923.11,236.74 L924.83,238.17 L926.38,239.78 L927.74,241.59 L928.91,243.55 L929.88,245.67 L930.63,247.91 L931.15,250.25 L931.45,252.68 L931.52,255.17 L931.36,257.69 L930.96,260.22 L930.34,262.74 L929.50,265.22 L928.45,267.63 L927.19,269.96 L925.75,272.19 L924.13,274.28 L922.35,276.23 L920.43,278.00 L918.38,279.60 L916.23,280.99 L913.99,282.16 L911.69,283.12 L909.35,283.83 L906.99,284.31 L904.64,284.54 L902.31,284.52 L900.03,284.26 L897.83,283.74 L895.72,282.99 L893.72,282.01 L891.85,280.80 L890.14,279.38 L888.59,277.76 L887.22,275.96 L886.05,273.99 L885.09,271.87 L884.34,269.63 L883.81,267.29 L883.51,264.86 L883.45,262.38 L883.61,259.86 L884.01,257.32 L884.63,254.81 L885.47,252.33 L886.52,249.91 L887.77,247.58 L889.22,245.36 L890.84,243.26 L892.62,241.32 L894.54,239.54 L896.59,237.95 L898.74,236.56 L900.98,235.38 L903.28,234.43 L905.62,233.71 L907.98,233.23 L910.33,233.00Z" fill="url(#hg1)"/><path d="M934.56,247.32 L936.83,247.59 L939.04,248.10 L941.15,248.85 L943.15,249.84 L945.01,251.04 L946.73,252.47 L948.28,254.08 L949.64,255.89 L950.81,257.85 L951.78,259.97 L952.53,262.21 L953.05,264.55 L953.35,266.98 L953.42,269.47 L953.26,271.99 L952.86,274.52 L952.24,277.04 L951.40,279.52 L950.35,281.93 L949.09,284.26 L947.65,286.49 L946.03,288.58 L944.25,290.53 L942.33,292.30 L940.28,293.90 L938.13,295.29 L935.89,296.46 L933.59,297.42 L931.25,298.13 L928.89,298.61 L926.54,298.84 L924.21,298.82 L921.93,298.56 L919.73,298.04 L917.62,297.29 L915.62,296.31 L913.75,295.10 L912.04,293.68 L910.49,292.06 L909.12,290.26 L907.95,288.29 L906.99,286.17 L906.24,283.93 L905.71,281.59 L905.41,279.16 L905.35,276.68 L905.51,274.16 L905.91,271.62 L906.53,269.11 L907.37,266.63 L908.42,264.21 L909.67,261.88 L911.12,259.66 L912.74,257.56 L914.52,255.62 L916.44,253.84 L918.49,252.25 L920.64,250.86 L922.88,249.68 L925.18,248.73 L927.52,248.01 L929.88,247.53 L932.23,247.30Z" fill="url(#bg)" stroke="#111" stroke-width="1.1"/></g>
<g clip-path="url(#ch2)"><path d="M858.54,502.36 L860.82,502.63 L863.02,503.14 L865.13,503.89 L867.13,504.88 L869.00,506.09 L870.71,507.51 L872.26,509.13 L873.63,510.93 L874.80,512.90 L875.76,515.01 L876.51,517.25 L877.04,519.60 L877.34,522.02 L877.40,524.51 L877.24,527.03 L876.84,529.56 L876.22,532.08 L875.38,534.56 L874.33,536.97 L873.08,539.30 L871.63,541.53 L870.01,543.62 L868.23,545.57 L866.31,547.35 L864.26,548.94 L862.11,550.33 L859.87,551.51 L857.57,552.46 L855.23,553.18 L852.87,553.65 L850.52,553.88 L848.19,553.86 L845.92,553.60 L843.71,553.09 L841.60,552.33 L839.60,551.35 L837.74,550.14 L836.02,548.72 L834.47,547.10 L833.11,545.30 L831.94,543.33 L830.97,541.22 L830.22,538.98 L829.70,536.63 L829.40,534.20 L829.33,531.72 L829.49,529.20 L829.89,526.67 L830.51,524.15 L831.35,521.67 L832.40,519.25 L833.66,516.92 L835.10,514.70 L836.72,512.60 L838.50,510.66 L840.42,508.88 L842.47,507.29 L844.62,505.90 L846.86,504.72 L849.16,503.77 L851.50,503.05 L853.86,502.58 L856.21,502.35Z" fill="url(#hg2)"/><path d="M880.44,516.66 L882.72,516.93 L884.92,517.44 L887.03,518.19 L889.03,519.18 L890.90,520.39 L892.61,521.81 L894.16,523.43 L895.53,525.23 L896.70,527.20 L897.66,529.31 L898.41,531.55 L898.94,533.90 L899.24,536.32 L899.30,538.81 L899.14,541.33 L898.74,543.86 L898.12,546.38 L897.28,548.86 L896.23,551.27 L894.98,553.60 L893.53,555.83 L891.91,557.92 L890.13,559.87 L888.21,561.65 L886.16,563.24 L884.01,564.63 L881.77,565.81 L879.47,566.76 L877.13,567.48 L874.77,567.95 L872.42,568.18 L870.09,568.16 L867.82,567.90 L865.61,567.39 L863.50,566.63 L861.50,565.65 L859.64,564.44 L857.92,563.02 L856.37,561.40 L855.01,559.60 L853.84,557.63 L852.87,555.52 L852.12,553.28 L851.60,550.93 L851.30,548.50 L851.23,546.02 L851.39,543.50 L851.79,540.97 L852.41,538.45 L853.25,535.97 L854.30,533.55 L855.56,531.22 L857.00,529.00 L858.62,526.90 L860.40,524.96 L862.32,523.18 L864.37,521.59 L866.52,520.20 L868.76,519.02 L871.06,518.07 L873.40,517.35 L875.76,516.88 L878.11,516.65Z" fill="url(#bg)" stroke="#111" stroke-width="1.1"/></g>
<g clip-path="url(#ch3)"><path d="M618.81,623.92 L621.08,624.19 L623.29,624.70 L625.40,625.45 L627.40,626.44 L629.26,627.64 L630.98,629.07 L632.53,630.68 L633.89,632.49 L635.06,634.45 L636.03,636.57 L636.78,638.81 L637.30,641.15 L637.60,643.58 L637.67,646.07 L637.51,648.59 L637.11,651.12 L636.49,653.64 L635.65,656.11 L634.60,658.53 L633.34,660.86 L631.90,663.09 L630.28,665.18 L628.50,667.13 L626.58,668.90 L624.53,670.50 L622.38,671.89 L620.14,673.06 L617.84,674.02 L615.50,674.73 L613.14,675.21 L610.79,675.44 L608.46,675.42 L606.18,675.16 L603.98,674.64 L601.87,673.89 L599.87,672.91 L598.00,671.70 L596.29,670.28 L594.74,668.66 L593.37,666.86 L592.20,664.89 L591.24,662.77 L590.49,660.53 L589.96,658.19 L589.66,655.76 L589.60,653.28 L589.76,650.75 L590.16,648.22 L590.78,645.71 L591.62,643.23 L592.67,640.81 L593.92,638.48 L595.37,636.26 L596.99,634.16 L598.77,632.22 L600.69,630.44 L602.74,628.85 L604.89,627.46 L607.13,626.28 L609.43,625.33 L611.77,624.61 L614.13,624.13 L616.48,623.90Z" fill="url(#hg3)"/><path d="M640.71,638.22 L642.98,638.49 L645.19,639.00 L647.30,639.75 L649.30,640.74 L651.16,641.94 L652.88,643.37 L654.43,644.98 L655.79,646.79 L656.96,648.75 L657.93,650.87 L658.68,653.11 L659.20,655.45 L659.50,657.88 L659.57,660.37 L659.41,662.89 L659.01,665.42 L658.39,667.94 L657.55,670.41 L656.50,672.83 L655.24,675.16 L653.80,677.39 L652.18,679.48 L650.40,681.43 L648.48,683.20 L646.43,684.80 L644.28,686.19 L642.04,687.36 L639.74,688.32 L637.40,689.03 L635.04,689.51 L632.69,689.74 L630.36,689.72 L628.08,689.46 L625.88,688.94 L623.77,688.19 L621.77,687.21 L619.90,686.00 L618.19,684.58 L616.64,682.96 L615.27,681.16 L614.10,679.19 L613.14,677.07 L612.39,674.83 L611.86,672.49 L611.56,670.06 L611.50,667.58 L611.66,665.05 L612.06,662.52 L612.68,660.01 L613.52,657.53 L614.57,655.11 L615.82,652.78 L617.27,650.56 L618.89,648.46 L620.67,646.52 L622.59,644.74 L624.64,643.15 L626.79,641.76 L629.03,640.58 L631.33,639.63 L633.67,638.91 L636.03,638.43 L638.38,638.20Z" fill="url(#bg)" stroke="#111" stroke-width="1.1"/></g>
<g clip-path="url(#ch4)"><path d="M433.19,476.14 L435.47,476.40 L437.67,476.92 L439.78,477.67 L441.78,478.65 L443.65,479.86 L445.36,481.28 L446.91,482.90 L448.28,484.70 L449.45,486.67 L450.41,488.79 L451.16,491.03 L451.69,493.37 L451.99,495.80 L452.05,498.28 L451.89,500.80 L451.49,503.34 L450.87,505.85 L450.03,508.33 L448.98,510.75 L447.73,513.08 L446.28,515.30 L444.66,517.40 L442.88,519.34 L440.96,521.12 L438.91,522.71 L436.76,524.10 L434.52,525.28 L432.22,526.23 L429.88,526.95 L427.52,527.43 L425.17,527.66 L422.84,527.64 L420.57,527.37 L418.36,526.86 L416.25,526.11 L414.25,525.12 L412.39,523.92 L410.67,522.49 L409.12,520.88 L407.76,519.07 L406.59,517.11 L405.62,514.99 L404.87,512.75 L404.35,510.41 L404.05,507.98 L403.98,505.49 L404.14,502.97 L404.54,500.44 L405.16,497.92 L406.00,495.44 L407.05,493.03 L408.31,490.70 L409.75,488.47 L411.37,486.38 L413.15,484.43 L415.07,482.66 L417.12,481.06 L419.27,479.67 L421.51,478.50 L423.81,477.54 L426.15,476.83 L428.51,476.35 L430.86,476.12Z" fill="url(#hg4)"/><path d="M455.09,490.44 L457.37,490.70 L459.57,491.22 L461.68,491.97 L463.68,492.95 L465.55,494.16 L467.26,495.58 L468.81,497.20 L470.18,499.00 L471.35,500.97 L472.31,503.09 L473.06,505.33 L473.59,507.67 L473.89,510.10 L473.95,512.58 L473.79,515.10 L473.39,517.64 L472.77,520.15 L471.93,522.63 L470.88,525.05 L469.63,527.38 L468.18,529.60 L466.56,531.70 L464.78,533.64 L462.86,535.42 L460.81,537.01 L458.66,538.40 L456.42,539.58 L454.12,540.53 L451.78,541.25 L449.42,541.73 L447.07,541.96 L444.74,541.94 L442.47,541.67 L440.26,541.16 L438.15,540.41 L436.15,539.42 L434.29,538.22 L432.57,536.79 L431.02,535.18 L429.66,533.37 L428.49,531.41 L427.52,529.29 L426.77,527.05 L426.25,524.71 L425.95,522.28 L425.88,519.79 L426.04,517.27 L426.44,514.74 L427.06,512.22 L427.90,509.74 L428.95,507.33 L430.21,505.00 L431.65,502.77 L433.27,500.68 L435.05,498.73 L436.97,496.96 L439.02,495.36 L441.17,493.97 L443.41,492.80 L445.71,491.84 L448.05,491.13 L450.41,490.65 L452.76,490.42Z" fill="url(#bg)" stroke="#111" stroke-width="1.1"/></g>
<g clip-path="url(#ch5)"><path d="M487.31,206.80 L489.58,207.06 L491.79,207.57 L493.90,208.33 L495.90,209.31 L497.76,210.52 L499.48,211.94 L501.03,213.56 L502.39,215.36 L503.56,217.33 L504.53,219.44 L505.28,221.68 L505.80,224.03 L506.10,226.46 L506.17,228.94 L506.01,231.46 L505.61,233.99 L504.99,236.51 L504.15,238.99 L503.10,241.41 L501.84,243.74 L500.40,245.96 L498.78,248.06 L497.00,250.00 L495.08,251.78 L493.03,253.37 L490.88,254.76 L488.64,255.94 L486.34,256.89 L484.00,257.61 L481.64,258.08 L479.29,258.31 L476.96,258.30 L474.68,258.03 L472.48,257.52 L470.37,256.77 L468.37,255.78 L466.50,254.57 L464.79,253.15 L463.24,251.53 L461.87,249.73 L460.70,247.76 L459.74,245.65 L458.99,243.41 L458.46,241.06 L458.16,238.64 L458.10,236.15 L458.26,233.63 L458.66,231.10 L459.28,228.58 L460.12,226.10 L461.17,223.69 L462.42,221.36 L463.87,219.13 L465.49,217.04 L467.27,215.09 L469.19,213.31 L471.24,211.72 L473.39,210.33 L475.63,209.15 L477.93,208.20 L480.27,207.48 L482.63,207.01 L484.98,206.78Z" fill="url(#hg5)"/><path d="M509.21,221.10 L511.48,221.36 L513.69,221.87 L515.80,222.63 L517.80,223.61 L519.66,224.82 L521.38,226.24 L522.93,227.86 L524.29,229.66 L525.46,231.63 L526.43,233.74 L527.18,235.98 L527.70,238.33 L528.00,240.76 L528.07,243.24 L527.91,245.76 L527.51,248.29 L526.89,250.81 L526.05,253.29 L525.00,255.71 L523.74,258.04 L522.30,260.26 L520.68,262.36 L518.90,264.30 L516.98,266.08 L514.93,267.67 L512.78,269.06 L510.54,270.24 L508.24,271.19 L505.90,271.91 L503.54,272.38 L501.19,272.61 L498.86,272.60 L496.58,272.33 L494.38,271.82 L492.27,271.07 L490.27,270.08 L488.40,268.87 L486.69,267.45 L485.14,265.83 L483.77,264.03 L482.60,262.06 L481.64,259.95 L480.89,257.71 L480.36,255.36 L480.06,252.94 L480.00,250.45 L480.16,247.93 L480.56,245.40 L481.18,242.88 L482.02,240.40 L483.07,237.99 L484.32,235.66 L485.77,233.43 L487.39,231.34 L489.17,229.39 L491.09,227.61 L493.14,226.02 L495.29,224.63 L497.53,223.45 L499.83,222.50 L502.17,221.78 L504.53,221.31 L506.88,221.08Z" fill="url(#bg)" stroke="#111" stroke-width="1.1"/></g>
<path d="M737.48,33.29 L745.74,33.92 L753.94,34.79 L762.09,35.89 L770.17,37.23 L778.18,38.81 L786.12,40.61 L793.97,42.66 L801.74,44.93 L809.42,47.43 L817.00,50.16 L824.47,53.12 L831.84,56.30 L839.10,59.71 L846.24,63.33 L853.26,67.17 L860.15,71.23 L866.91,75.50 L873.53,79.97 L880.01,84.65 L886.35,89.54 L892.53,94.62 L898.56,99.90 L904.44,105.38 L910.15,111.04 L915.69,116.88 L921.07,122.91 L926.27,129.11 L931.29,135.48 L936.14,142.03 L940.80,148.73 L945.27,155.59 L949.55,162.61 L953.64,169.78 L957.53,177.09 L961.23,184.54 L964.72,192.13 L968.01,199.84 L971.10,207.68 L973.97,215.64 L976.64,223.71 L979.10,231.88 L981.34,240.16 L983.36,248.53 L985.17,257.00 L986.77,265.55 L988.14,274.18 L989.29,282.88 L990.23,291.64 L990.94,300.47 L991.43,309.35 L991.70,318.28 L991.75,327.26 L991.58,336.27 L991.18,345.31 L990.56,354.37 L989.72,363.46 L988.66,372.55 L987.38,381.65 L985.89,390.75 L984.17,399.84 L982.23,408.92 L980.09,417.97 L977.72,427.01 L975.15,436.01 L972.36,444.97 L969.37,453.89 L966.16,462.76 L962.76,471.57 L959.15,480.31 L955.34,488.99 L951.33,497.60 L947.13,506.13 L942.74,514.56 L938.16,522.91 L933.40,531.16 L928.45,539.31 L923.33,547.34 L918.03,555.27 L912.55,563.07 L906.91,570.75 L901.11,578.29 L895.14,585.70 L889.02,592.97 L882.75,600.10 L876.33,607.07 L869.77,613.89 L863.07,620.55 L856.24,627.04 L849.27,633.37 L842.19,639.52 L834.98,645.49 L827.66,651.28 L820.23,656.89 L812.69,662.31 L805.05,667.53 L797.32,672.56 L789.51,677.38 L781.61,682.01 L773.63,686.42 L765.57,690.63 L757.45,694.62 L749.27,698.40 L741.04,701.96 L732.75,705.30 L724.42,708.42 L716.05,711.31 L707.64,713.98 L699.21,716.41 L690.76,718.62 L682.29,720.59 L673.82,722.34 L665.33,723.84 L656.85,725.11 L648.38,726.15 L639.92,726.95 L631.48,727.51 L623.06,727.83 L614.68,727.92 L606.33,727.76 L598.02,727.37 L589.76,726.74 L581.56,725.87 L573.41,724.77 L565.33,723.43 L557.32,721.85 L549.38,720.05 L541.53,718.00 L533.76,715.73 L526.08,713.23 L518.50,710.50 L511.03,707.54 L503.66,704.36 L496.40,700.95 L489.26,697.33 L482.24,693.49 L475.35,689.43 L468.59,685.16 L461.97,680.69 L455.49,676.01 L449.15,671.12 L442.97,666.04 L436.94,660.76 L431.06,655.28 L425.35,649.62 L419.81,643.78 L414.43,637.75 L409.23,631.55 L404.21,625.18 L399.36,618.63 L394.70,611.93 L390.23,605.07 L385.95,598.05 L381.86,590.88 L377.97,583.57 L374.27,576.12 L370.78,568.53 L367.49,560.82 L364.40,552.98 L361.53,545.02 L358.86,536.95 L356.40,528.78 L354.16,520.50 L352.14,512.13 L350.33,503.66 L348.73,495.11 L347.36,486.48 L346.21,477.78 L345.27,469.02 L344.56,460.19 L344.07,451.31 L343.80,442.38 L343.75,433.40 L343.92,424.39 L344.32,415.35 L344.94,406.29 L345.78,397.20 L346.84,388.11 L348.12,379.01 L349.61,369.91 L351.33,360.82 L353.27,351.74 L355.41,342.69 L357.78,333.65 L360.35,324.65 L363.14,315.69 L366.13,306.77 L369.34,297.90 L372.74,289.09 L376.35,280.35 L380.16,271.67 L384.17,263.06 L388.37,254.53 L392.76,246.10 L397.34,237.75 L402.10,229.50 L407.05,221.35 L412.17,213.32 L417.47,205.39 L422.95,197.59 L428.59,189.91 L434.39,182.37 L440.36,174.96 L446.48,167.69 L452.75,160.56 L459.17,153.59 L465.73,146.77 L472.43,140.11 L479.26,133.62 L486.23,127.29 L493.31,121.14 L500.52,115.17 L507.84,109.38 L515.27,103.77 L522.81,98.35 L530.45,93.13 L538.18,88.10 L545.99,83.28 L553.89,78.65 L561.87,74.24 L569.93,70.03 L578.05,66.04 L586.23,62.26 L594.46,58.70 L602.75,55.36 L611.08,52.24 L619.45,49.35 L627.86,46.68 L636.29,44.25 L644.74,42.04 L653.21,40.07 L661.68,38.32 L670.17,36.82 L678.65,35.55 L687.12,34.51 L695.58,33.71 L704.02,33.15 L712.44,32.83 L720.82,32.74 L729.17,32.90ZM709.59,172.11 L717.01,172.73 L724.35,173.67 L731.61,174.93 L738.77,176.50 L745.82,178.39 L752.75,180.59 L759.55,183.10 L766.21,185.91 L772.71,189.03 L779.06,192.44 L785.23,196.13 L791.22,200.12 L797.02,204.37 L802.62,208.91 L808.01,213.70 L813.19,218.75 L818.14,224.05 L822.86,229.60 L827.34,235.37 L831.58,241.37 L835.56,247.58 L839.28,254.00 L842.74,260.61 L845.93,267.41 L848.85,274.38 L851.48,281.51 L853.84,288.80 L855.90,296.23 L857.68,303.79 L859.16,311.46 L860.35,319.24 L861.24,327.12 L861.83,335.08 L862.12,343.10 L862.12,351.19 L861.81,359.32 L861.20,367.48 L860.30,375.66 L859.10,383.85 L857.60,392.04 L855.81,400.20 L853.73,408.34 L851.37,416.43 L848.72,424.46 L845.79,432.43 L842.59,440.32 L839.12,448.12 L835.38,455.81 L831.39,463.38 L827.14,470.83 L822.65,478.14 L817.92,485.29 L812.95,492.29 L807.77,499.11 L802.36,505.75 L796.75,512.19 L790.94,518.43 L784.94,524.46 L778.76,530.27 L772.41,535.84 L765.90,541.18 L759.24,546.27 L752.43,551.10 L745.49,555.67 L738.44,559.97 L731.28,563.99 L724.01,567.72 L716.66,571.17 L709.24,574.33 L701.75,577.18 L694.21,579.74 L686.63,581.98 L679.02,583.91 L671.39,585.53 L663.76,586.84 L656.13,587.82 L648.52,588.49 L640.94,588.83 L633.40,588.85 L625.91,588.55 L618.49,587.93 L611.15,586.99 L603.89,585.73 L596.73,584.16 L589.68,582.27 L582.75,580.07 L575.95,577.56 L569.29,574.75 L562.79,571.63 L556.44,568.22 L550.27,564.53 L544.28,560.54 L538.48,556.29 L532.88,551.75 L527.49,546.96 L522.31,541.91 L517.36,536.61 L512.64,531.06 L508.16,525.29 L503.92,519.29 L499.94,513.08 L496.22,506.66 L492.76,500.05 L489.57,493.25 L486.65,486.28 L484.02,479.15 L481.66,471.86 L479.60,464.43 L477.82,456.87 L476.34,449.20 L475.15,441.42 L474.26,433.54 L473.67,425.58 L473.38,417.56 L473.38,409.47 L473.69,401.34 L474.30,393.18 L475.20,385.00 L476.40,376.81 L477.90,368.62 L479.69,360.46 L481.77,352.32 L484.13,344.23 L486.78,336.20 L489.71,328.23 L492.91,320.34 L496.38,312.54 L500.12,304.85 L504.11,297.28 L508.36,289.83 L512.85,282.52 L517.58,275.37 L522.55,268.37 L527.73,261.55 L533.14,254.91 L538.75,248.47 L544.56,242.23 L550.56,236.20 L556.74,230.39 L563.09,224.82 L569.60,219.48 L576.26,214.39 L583.07,209.56 L590.01,204.99 L597.06,200.69 L604.22,196.67 L611.49,192.94 L618.84,189.49 L626.26,186.33 L633.75,183.48 L641.29,180.92 L648.87,178.68 L656.48,176.75 L664.11,175.13 L671.74,173.82 L679.37,172.84 L686.98,172.17 L694.56,171.83 L702.10,171.81ZM727.04,85.24 L729.32,85.50 L731.52,86.02 L733.63,86.77 L735.63,87.75 L737.50,88.96 L739.21,90.38 L740.76,92.00 L742.13,93.80 L743.30,95.77 L744.26,97.89 L745.01,100.13 L745.54,102.47 L745.84,104.90 L745.90,107.38 L745.74,109.91 L745.34,112.44 L744.72,114.95 L743.88,117.43 L742.83,119.85 L741.58,122.18 L740.13,124.40 L738.51,126.50 L736.73,128.44 L734.81,130.22 L732.76,131.81 L730.61,133.20 L728.37,134.38 L726.07,135.33 L723.73,136.05 L721.37,136.53 L719.02,136.76 L716.69,136.74 L714.42,136.47 L712.21,135.96 L710.10,135.21 L708.10,134.22 L706.24,133.02 L704.52,131.59 L702.97,129.98 L701.61,128.17 L700.44,126.21 L699.47,124.09 L698.72,121.85 L698.20,119.51 L697.90,117.08 L697.83,114.59 L697.99,112.07 L698.39,109.54 L699.01,107.02 L699.85,104.55 L700.90,102.13 L702.16,99.80 L703.60,97.57 L705.22,95.48 L707.00,93.53 L708.92,91.76 L710.97,90.16 L713.12,88.77 L715.36,87.60 L717.66,86.64 L720.00,85.93 L722.36,85.45 L724.71,85.22ZM912.66,233.02 L914.93,233.29 L917.14,233.80 L919.25,234.55 L921.25,235.54 L923.11,236.74 L924.83,238.17 L926.38,239.78 L927.74,241.59 L928.91,243.55 L929.88,245.67 L930.63,247.91 L931.15,250.25 L931.45,252.68 L931.52,255.17 L931.36,257.69 L930.96,260.22 L930.34,262.74 L929.50,265.22 L928.45,267.63 L927.19,269.96 L925.75,272.19 L924.13,274.28 L922.35,276.23 L920.43,278.00 L918.38,279.60 L916.23,280.99 L913.99,282.16 L911.69,283.12 L909.35,283.83 L906.99,284.31 L904.64,284.54 L902.31,284.52 L900.03,284.26 L897.83,283.74 L895.72,282.99 L893.72,282.01 L891.85,280.80 L890.14,279.38 L888.59,277.76 L887.22,275.96 L886.05,273.99 L885.09,271.87 L884.34,269.63 L883.81,267.29 L883.51,264.86 L883.45,262.38 L883.61,259.86 L884.01,257.32 L884.63,254.81 L885.47,252.33 L886.52,249.91 L887.77,247.58 L889.22,245.36 L890.84,243.26 L892.62,241.32 L894.54,239.54 L896.59,237.95 L898.74,236.56 L900.98,235.38 L903.28,234.43 L905.62,233.71 L907.98,233.23 L910.33,233.00ZM858.54,502.36 L860.82,502.63 L863.02,503.14 L865.13,503.89 L867.13,504.88 L869.00,506.09 L870.71,507.51 L872.26,509.13 L873.63,510.93 L874.80,512.90 L875.76,515.01 L876.51,517.25 L877.04,519.60 L877.34,522.02 L877.40,524.51 L877.24,527.03 L876.84,529.56 L876.22,532.08 L875.38,534.56 L874.33,536.97 L873.08,539.30 L871.63,541.53 L870.01,543.62 L868.23,545.57 L866.31,547.35 L864.26,548.94 L862.11,550.33 L859.87,551.51 L857.57,552.46 L855.23,553.18 L852.87,553.65 L850.52,553.88 L848.19,553.86 L845.92,553.60 L843.71,553.09 L841.60,552.33 L839.60,551.35 L837.74,550.14 L836.02,548.72 L834.47,547.10 L833.11,545.30 L831.94,543.33 L830.97,541.22 L830.22,538.98 L829.70,536.63 L829.40,534.20 L829.33,531.72 L829.49,529.20 L829.89,526.67 L830.51,524.15 L831.35,521.67 L832.40,519.25 L833.66,516.92 L835.10,514.70 L836.72,512.60 L838.50,510.66 L840.42,508.88 L842.47,507.29 L844.62,505.90 L846.86,504.72 L849.16,503.77 L851.50,503.05 L853.86,502.58 L856.21,502.35ZM618.81,623.92 L621.08,624.19 L623.29,624.70 L625.40,625.45 L627.40,626.44 L629.26,627.64 L630.98,629.07 L632.53,630.68 L633.89,632.49 L635.06,634.45 L636.03,636.57 L636.78,638.81 L637.30,641.15 L637.60,643.58 L637.67,646.07 L637.51,648.59 L637.11,651.12 L636.49,653.64 L635.65,656.11 L634.60,658.53 L633.34,660.86 L631.90,663.09 L630.28,665.18 L628.50,667.13 L626.58,668.90 L624.53,670.50 L622.38,671.89 L620.14,673.06 L617.84,674.02 L615.50,674.73 L613.14,675.21 L610.79,675.44 L608.46,675.42 L606.18,675.16 L603.98,674.64 L601.87,673.89 L599.87,672.91 L598.00,671.70 L596.29,670.28 L594.74,668.66 L593.37,666.86 L592.20,664.89 L591.24,662.77 L590.49,660.53 L589.96,658.19 L589.66,655.76 L589.60,653.28 L589.76,650.75 L590.16,648.22 L590.78,645.71 L591.62,643.23 L592.67,640.81 L593.92,638.48 L595.37,636.26 L596.99,634.16 L598.77,632.22 L600.69,630.44 L602.74,628.85 L604.89,627.46 L607.13,626.28 L609.43,625.33 L611.77,624.61 L614.13,624.13 L616.48,623.90ZM433.19,476.14 L435.47,476.40 L437.67,476.92 L439.78,477.67 L441.78,478.65 L443.65,479.86 L445.36,481.28 L446.91,482.90 L448.28,484.70 L449.45,486.67 L450.41,488.79 L451.16,491.03 L451.69,493.37 L451.99,495.80 L452.05,498.28 L451.89,500.80 L451.49,503.34 L450.87,505.85 L450.03,508.33 L448.98,510.75 L447.73,513.08 L446.28,515.30 L444.66,517.40 L442.88,519.34 L440.96,521.12 L438.91,522.71 L436.76,524.10 L434.52,525.28 L432.22,526.23 L429.88,526.95 L427.52,527.43 L425.17,527.66 L422.84,527.64 L420.57,527.37 L418.36,526.86 L416.25,526.11 L414.25,525.12 L412.39,523.92 L410.67,522.49 L409.12,520.88 L407.76,519.07 L406.59,517.11 L405.62,514.99 L404.87,512.75 L404.35,510.41 L404.05,507.98 L403.98,505.49 L404.14,502.97 L404.54,500.44 L405.16,497.92 L406.00,495.44 L407.05,493.03 L408.31,490.70 L409.75,488.47 L411.37,486.38 L413.15,484.43 L415.07,482.66 L417.12,481.06 L419.27,479.67 L421.51,478.50 L423.81,477.54 L426.15,476.83 L428.51,476.35 L430.86,476.12ZM487.31,206.80 L489.58,207.06 L491.79,207.57 L493.90,208.33 L495.90,209.31 L497.76,210.52 L499.48,211.94 L501.03,213.56 L502.39,215.36 L503.56,217.33 L504.53,219.44 L505.28,221.68 L505.80,224.03 L506.10,226.46 L506.17,228.94 L506.01,231.46 L505.61,233.99 L504.99,236.51 L504.15,238.99 L503.10,241.41 L501.84,243.74 L500.40,245.96 L498.78,248.06 L497.00,250.00 L495.08,251.78 L493.03,253.37 L490.88,254.76 L488.64,255.94 L486.34,256.89 L484.00,257.61 L481.64,258.08 L479.29,258.31 L476.96,258.30 L474.68,258.03 L472.48,257.52 L470.37,256.77 L468.37,255.78 L466.50,254.57 L464.79,253.15 L463.24,251.53 L461.87,249.73 L460.70,247.76 L459.74,245.65 L458.99,243.41 L458.46,241.06 L458.16,238.64 L458.10,236.15 L458.26,233.63 L458.66,231.10 L459.28,228.58 L460.12,226.10 L461.17,223.69 L462.42,221.36 L463.87,219.13 L465.49,217.04 L467.27,215.09 L469.19,213.31 L471.24,211.72 L473.39,210.33 L475.63,209.15 L477.93,208.20 L480.27,207.48 L482.63,207.01 L484.98,206.78Z" fill="none" stroke="#5aa8f6" stroke-width="2.3"/>
<path d="M331,160.6 L685,391.8" stroke="#0800d8" stroke-width="2.4" stroke-dasharray="3,7.6,10.1,8" stroke-dashoffset="0.3" />
<path d="M764.4,48 L1217,75.5" stroke="#2b1d10" stroke-width="1.1"/>
<path d="M625,742 L1083,770" stroke="#2b1d10" stroke-width="1.1"/>
<path d="M1216.5,78 L1077.4,769.8" stroke="#2b1d10" stroke-width="1.1"/>
<path d="M1216.5,78.0 L1210.0,94.0 L1216.3,95.3Z" fill="#000"/>
<path d="M1077.4,769.8 L1083.9,753.8 L1077.6,752.5Z" fill="#000"/>
<circle cx="1217" cy="75.5" r="3.3" fill="#1a1ac8"/>
<path d="M500.3,465.4 L1246,185" stroke="#111" stroke-width="1.1"/>
<path d="M881.3,323.3 L898.4,320.4 L896.1,314.2Z" fill="#000"/>
<circle cx="881.3" cy="323.3" r="3.3" fill="#1a1ac8"/>
<g transform="translate(1187.10,204.25) rotate(-18.30)"><circle cx="5.5" cy="-5.8" r="5.2" fill="none" stroke="#000" stroke-width="1.2"/><path d="M2,-0.5 L9,-11" stroke="#000" stroke-width="1.1"/><text x="13.5" y="0" font-family="Liberation Sans" font-size="17" letter-spacing="0.3" stroke="#000" stroke-width="0.75" fill="#000">108.00</text></g>
<g transform="translate(1148.90,396.30) rotate(-78.70)"><circle cx="5.5" cy="-5.8" r="5.2" fill="none" stroke="#000" stroke-width="1.2"/><path d="M2,-0.5 L9,-11" stroke="#000" stroke-width="1.1"/><text x="13.5" y="0" font-family="Liberation Sans" font-size="17" letter-spacing="0.3" stroke="#000" stroke-width="0.75" fill="#000">180.00</text></g>
<defs><linearGradient id="ty" gradientUnits="userSpaceOnUse" x1="703.5" y1="326" x2="712" y2="281"><stop offset="0" stop-color="#f5a040" stop-opacity="0.15"/><stop offset="0.45" stop-color="#f5a040" stop-opacity="0.85"/><stop offset="1" stop-color="#f5a040"/></linearGradient><linearGradient id="tyd" gradientUnits="userSpaceOnUse" x1="703.5" y1="326" x2="712" y2="281"><stop offset="0" stop-color="#8a5a20" stop-opacity="0"/><stop offset="0.5" stop-color="#8a5a20" stop-opacity="0.6"/><stop offset="1" stop-color="#6a4010" stop-opacity="0.9"/></linearGradient><linearGradient id="tx" gradientUnits="userSpaceOnUse" x1="711" y1="335.5" x2="752" y2="337.5"><stop offset="0" stop-color="#f5a040" stop-opacity="0.15"/><stop offset="0.45" stop-color="#f5a040" stop-opacity="0.85"/><stop offset="1" stop-color="#f5a040"/></linearGradient><linearGradient id="txd" gradientUnits="userSpaceOnUse" x1="711" y1="335.5" x2="752" y2="337.5"><stop offset="0" stop-color="#8a5a20" stop-opacity="0"/><stop offset="0.5" stop-color="#8a5a20" stop-opacity="0.6"/><stop offset="1" stop-color="#6a4010" stop-opacity="0.9"/></linearGradient></defs>
<defs><radialGradient id="glow"><stop offset="0" stop-color="#fff" stop-opacity="1"/><stop offset="1" stop-color="#fff" stop-opacity="0"/></radialGradient></defs><circle cx="703" cy="332" r="16" fill="url(#glow)"/>
<g><path d="M703.5,326 L712.5,280" stroke="url(#tyd)" stroke-width="3.4"/><path d="M703.5,326 L712.5,280" stroke="url(#ty)" stroke-width="1.6"/><path d="M715.2,270 L708.2,279.6 L711,280.3 L710.8,282 L713.8,282.6 L714.4,281 L717.8,281.8Z" fill="#f49a2a" stroke="#1a1208" stroke-width="1.1" stroke-linejoin="round"/><path d="M711,335.4 L752,337.4" stroke="url(#txd)" stroke-width="3.4"/><path d="M711,335.4 L752,337.4" stroke="url(#tx)" stroke-width="1.6"/><path d="M761.4,338.8 L751.6,333.4 L751.3,336 L749.5,336 L749.3,339.2 L751.2,339.3 L750.8,343.6Z" fill="#f49a2a" stroke="#1a1208" stroke-width="1.1" stroke-linejoin="round"/><text x="716.5" y="255.5" font-family="Liberation Sans" font-size="10.5" fill="#111">Y</text><text x="774" y="340.5" font-family="Liberation Sans" font-size="10.5" fill="#111">X</text></g>
<path d="M917,451.5 L935.5,463.3" stroke="#1a1a1a" stroke-width="2.4" stroke-opacity="0.85"/><path d="M917,451.5 L935.5,463.3" stroke="#c8a070" stroke-width="0.9"/><path d="M912.3,447.5 L919,448.6 L916.8,456Z" fill="#f5a030" stroke="#111" stroke-width="1" stroke-linejoin="round"/>
<path d="M938.5,462 L938.5,469 M935,465.5 L942,465.5" stroke="#7ab8f2" stroke-width="1"/>
<g stroke="#1a10d0" fill="none" stroke-linecap="round"><path d="M989.3,400.5 L1033,403" stroke-width="1.5" stroke="#3020c0"/><path d="M1011.3,414.6 L1055,417.3" stroke-width="1.5" stroke="#3020c0"/><path d="M1018.3,391.5 L1073.6,428" stroke-width="1.7"/></g><path d="M1023,393.5 L1036,400.5 L1034,403.5 L1023,396Z" fill="#1a10d0"/><path d="M1041.5,404 L1051,404.6 L1058.5,408.5 L1066,412.5 L1070,416.3 L1067,418 L1056,418 L1048,412.5Z" fill="#1a10d0"/><path d="M1056,418 L1069,423.5 L1068,425.5 L1057,420Z" fill="#1a10d0"/><path d="M1043,406 L1053,406.8 M1049,410.2 L1060,411.3 M1055,414.4 L1064,415" stroke="#c8c8f0" stroke-width="0.9"/><ellipse cx="1034.6" cy="403.3" rx="3.3" ry="3" fill="#1a10d0"/>
<rect x="341.5" y="8.5" width="217" height="23" fill="#fbfbfb" stroke="#d6d6d6" stroke-width="1"/>
<path d="M516,9 L558,9 L558,31 L516,31 L525,20Z" fill="#c6dcf2"/>
<path d="M516,9 L558,9 L558,31 L516,31" fill="none" stroke="#a9c7e6" stroke-width="1"/>
<path d="M373.5,8.5 L381.0,20 L373.5,31.5" fill="none" stroke="#d0d0d0" stroke-width="1"/>
<path d="M405.5,8.5 L413.0,20 L405.5,31.5" fill="none" stroke="#d0d0d0" stroke-width="1"/>
<path d="M516,8.5 L525,20 L516,31.5" fill="none" stroke="#b0c8e0" stroke-width="1"/>
<g transform="translate(351,9) scale(1.0)"><path d="M4.3,8.3 L6.8,7.6 L7.5,5.4 L12,3.5 L16.6,4.8 L16.6,10.3 L20.6,11.3 L20.6,17.6 L15.6,20.6 L4.3,13.5 Z" fill="#f3d77e" stroke="#8a6a2a" stroke-width="1.2" stroke-linejoin="round"/><path d="M7.5,5.4 L12,3.5 L16.6,4.8 L11.6,6.5Z M11.6,11.8 L16.6,10.3 L20.6,11.3 L15.6,13.6Z" fill="#f9ebb8"/><path d="M7.5,5.4 L11.6,6.5 L16.6,4.8 M11.6,6.5 L11.6,11.8 L15.6,13.6 L20.6,11.3 M15.6,13.6 L15.6,20.6 M11.6,11.8 L16.6,10.3" fill="none" stroke="#8a6a2a" stroke-width="1"/></g>
<g transform="translate(386,12)"><path d="M1,4 L8,1 L16,4 L16,13 L9,17 L1,14Z" fill="#8fc8ea" stroke="#3a6a8a" stroke-width="1"/><path d="M1,4 L9,7 L16,4 M9,7 L9,17" fill="none" stroke="#3a6a8a" stroke-width="0.8"/><path d="M1,4 L8,1 L16,4 L9,7Z" fill="#c5e4f6"/></g>
<g transform="translate(418,11)"><path d="M7,1.5 L9.5,0 L17,1.5 L17,16 L14.5,17.5 L7,15Z" fill="#fff" stroke="#666" stroke-width="1"/><path d="M7,1.5 L14.5,3 L14.5,17.5" fill="none" stroke="#666" stroke-width="0.9"/><path d="M0,6 L5,4 L11,6 L11,15 L6,17 L0,15Z" fill="#8fc8ea" stroke="#3a6a8a" stroke-width="1"/><path d="M0,6 L6,8 L11,6 M6,8 L6,17" fill="none" stroke="#3a6a8a" stroke-width="0.8"/></g>
<text x="442.5" y="24.6" font-family="Liberation Sans" font-size="11" fill="#111">Boss-Extrude1</text>
<defs><linearGradient id="sq" x1="0" y1="0" x2="1" y2="1"><stop offset="0" stop-color="#d4ebf8"/><stop offset="1" stop-color="#8cbfdf"/></linearGradient></defs>
<rect x="530.5" y="13.5" width="13" height="13" fill="url(#sq)" stroke="#4a6a80" stroke-width="1"/>
<path d="M463.5,42.5 L466.5,42.5 L466.5,49.5 L470.5,49.5 L470.5,47 L474,51 L470.5,55 L470.5,52.5 L463.5,52.5Z" fill="#fff" stroke="#8a8a8a" stroke-width="1"/>
<rect x="479.5" y="37.5" width="68" height="23" fill="#fbfbfb" stroke="#d6d6d6" stroke-width="1"/>
<path d="M496,40.5 L484.5,40.5 L484.5,52 Q484.5,57.5 490,57.5 L496,57.5" fill="none" stroke="#555" stroke-width="1"/>
<text x="506.5" y="53.8" font-family="Liberation Sans" font-size="11" fill="#111">Sketch1</text>
</g>
<g transform="translate(4,4)"><path d="M9.3,10 L9.3,5.5 L14.5,4 L20.8,7 L20.8,20.3 L16.5,21.8 L12,19.3Z" fill="#fbfbfb" stroke="#1c1c1c" stroke-width="1.1" stroke-linejoin="round"/><path d="M9.3,5.5 L16.5,8.3 L20.8,7 M16.5,8.3 L16.5,21.8" fill="none" stroke="#555" stroke-width="0.9"/><path d="M3.3,9.3 L9,7.5 L14.5,10 L14.5,17.7 L8,19.8 L3.3,16.5Z" fill="#4ea6d8" stroke="#0f3a58" stroke-width="1.2" stroke-linejoin="round"/><path d="M3.3,9.3 L9,7.5 L14.5,10 L8,11.7Z" fill="#9ad3f0"/><path d="M3.3,9.3 L8,11.7 L14.5,10 M8,11.7 L8,19.8" fill="none" stroke="#0f3a58" stroke-width="1"/></g>
<path d="M34.9,14.9 L40.1,14.9 L37.5,17.900000000000002Z" fill="#4a4a4a"/>
<g transform="translate(4,30)"><path d="M5.5,6.3 L11,5 L19.8,5.8 L19.8,18.5 L8.8,21.5 L5.5,18.8Z" fill="#f2f2f2" stroke="#1c1c1c" stroke-width="1.1" stroke-linejoin="round"/><path d="M5.5,6.3 L8.8,8.3 L19.8,6.5 M8.8,8.3 L8.8,21.5" fill="none" stroke="#444" stroke-width="0.9"/><path d="M10.3,10.3 L17.8,9.3 L17.8,16.5 L10.3,17.8Z" fill="#fff" stroke="#0f3a58" stroke-width="1.1"/><path d="M14,9.8 L17.8,9.3 L17.8,16.5 L11,17.7 L11,15.5 L14,15Z" fill="#4ea6d8"/></g>
<path d="M34.9,41.1 L40.1,41.1 L37.5,44.1Z" fill="#4a4a4a"/>
<rect x="5" y="58" width="40" height="1" fill="#9c9c9c"/>
<g transform="translate(4,64)"><path d="M3.3,6.3 L10,4.2 L14.5,4.5 Q19.5,5.5 20.5,9.5 L20.5,17.5 L12,21.3 L3.3,17.5Z" fill="#ececec" stroke="#1c1c1c" stroke-width="1.2" stroke-linejoin="round"/><path d="M9,8.3 L14.5,5.3 Q19.5,6.5 20.5,10 L12.5,13.5 Q11.5,10 9,8.3Z" fill="#4ea6d8" stroke="#0f3a58" stroke-width="1"/><path d="M12.3,13.5 L12.3,21.3" stroke="#888" stroke-width="0.9"/></g>
<path d="M34.9,74.6 L40.1,74.6 L37.5,77.6Z" fill="#4a4a4a"/>
<g transform="translate(4,91)"><path d="M12.5,4.3 L14.3,3.3 L19.5,6.3 L19.5,18.5 L10.5,21 L4.3,14.2 L6,13.5 L12.5,17Z" fill="#f4f4f4" stroke="#1c1c1c" stroke-width="1.1" stroke-linejoin="round"/><path d="M7,15 L14.8,6 L15.5,6.5 L15.5,16.8 L9.5,17.5Z" fill="#4ea6d8" stroke="#0f3a58" stroke-width="1"/><path d="M12.5,4.3 L17.3,7 L17.3,18.5" fill="none" stroke="#666" stroke-width="0.8"/></g>
<g transform="translate(4,117)"><path d="M3.3,5.3 L11,3.3 L14.5,3.5 L20.5,7.3 L20.5,17.3 L9.5,21.3 L3.3,16.3Z" fill="#f6f6f6" stroke="#1c1c1c" stroke-width="1.2" stroke-linejoin="round"/><path d="M7.5,6.3 L13.5,5.3 L18.5,7.3 L18.5,17 L11,19.5 L11,10Z" fill="#4ea6d8" stroke="#0f3a58" stroke-width="1"/><path d="M13.5,5.3 L13.5,12.5 L18.5,15.5 M13.5,12.5 L11,13.8" fill="none" stroke="#0f3a58" stroke-width="0.9"/><path d="M11,13.5 L18.5,15.5 L18.5,17 L11,19.5Z" fill="#9ad3f0"/><path d="M3.3,5.3 L9.5,9.8 L9.5,21.3" fill="none" stroke="#999" stroke-width="0.9"/></g>
<g transform="translate(4,143)"><path d="M3.3,6.5 L14.5,4.3 L20.8,11.5 L14.5,12.5Z" fill="#9ad3f0"/><path d="M3.3,6.5 L14.5,12.5 L14.5,19.5 L3.3,17.8Z" fill="#3f8fc4"/><path d="M14.5,12.5 L20.8,11.5 L20.8,18.8 L14.5,19.5Z" fill="#f4f4ee"/><path d="M3.3,6.5 L14.5,4.3 L20.8,11.5 L20.8,18.8 L14.5,19.5 L3.3,17.8Z" fill="none" stroke="#1c1c1c" stroke-width="1.2" stroke-linejoin="round"/><path d="M3.3,6.5 L14.5,12.5 L20.8,11.5 M14.5,12.5 L14.5,19.5" fill="none" stroke="#0f3a58" stroke-width="1"/></g>
<g transform="translate(4,168)"><path d="M3.3,8 L8.5,7 L15,7.5 L18.7,12 L18.8,19.8 L8,22.5 L3.3,18.8Z" fill="#efefef" stroke="#1c1c1c" stroke-width="1.2" stroke-linejoin="round"/><path d="M3.3,8 L8.5,10.3 L15,9 M8.5,10.3 L8.5,22.5" fill="none" stroke="#888" stroke-width="0.9"/><ellipse cx="13.5" cy="15" rx="3.3" ry="3.6" fill="#3f8fb8" stroke="#0f3a58" stroke-width="1"/><path d="M13.3,7.5 L20.5,13" stroke="#111" stroke-width="2.4"/><path d="M11.5,6.5 L13.5,5 L14.5,7.5Z" fill="#f0b030"/><circle cx="7.5" cy="6.5" r="1" fill="#c89020"/><circle cx="9.5" cy="4.5" r="0.7" fill="#333"/><circle cx="17.5" cy="5.3" r="1" fill="#c89020"/><circle cx="20.5" cy="7.3" r="0.7" fill="#333"/></g>
<path d="M34.9,179.6 L40.1,179.6 L37.5,182.6Z" fill="#4a4a4a"/>
<rect x="5" y="196" width="40" height="1" fill="#9c9c9c"/>
<g transform="translate(4,202)"><path d="M4.25,4.25 L7.8,4.25 L7.8,6.3 L10.55,6.3 L10.55,9.5 L7.8,9.5 L7.8,11.6 L4.25,11.6Z" fill="#4ea6d8" stroke="#0f3a58" stroke-width="1.2" stroke-linejoin="round"/><path d="M13.35,4.25 L16.9,4.25 L16.9,6.3 L19.65,6.3 L19.65,9.5 L16.9,9.5 L16.9,11.6 L13.35,11.6Z" fill="#fafafa" stroke="#1c1c1c" stroke-width="1.2" stroke-linejoin="round"/><path d="M4.25,13.35 L7.8,13.35 L7.8,15.399999999999999 L10.55,15.399999999999999 L10.55,18.6 L7.8,18.6 L7.8,20.7 L4.25,20.7Z" fill="#fafafa" stroke="#1c1c1c" stroke-width="1.2" stroke-linejoin="round"/><path d="M13.35,13.35 L16.9,13.35 L16.9,15.399999999999999 L19.65,15.399999999999999 L19.65,18.6 L16.9,18.6 L16.9,20.7 L13.35,20.7Z" fill="#fafafa" stroke="#1c1c1c" stroke-width="1.2" stroke-linejoin="round"/></g>
<path d="M34.9,212.6 L40.1,212.6 L37.5,215.6Z" fill="#4a4a4a"/>
<rect x="5" y="230" width="40" height="1" fill="#9c9c9c"/>
<g transform="translate(4,236)"><circle cx="6" cy="6.8" r="2.6" fill="#86c6e8" stroke="#0f3a58" stroke-width="1.3"/><path d="M10.5,9.3 L20.8,6.3 L20.8,16.5 L10.5,21.5Z" fill="#6ab4de" stroke="#0f3a58" stroke-width="1.2" stroke-linejoin="round"/><path d="M15.3,5 L15.3,22" stroke="#111" stroke-width="1.3" stroke-dasharray="1.6,1.1"/></g>
<path d="M34.9,246.6 L40.1,246.6 L37.5,249.6Z" fill="#4a4a4a"/>
<g transform="translate(4,263)"><path d="M3.2,3.4 Q8.3,3.6 8.8,7.3 Q9.2,9.8 7.6,11.7 Q5,14 5.3,16.5 Q5.7,19.8 9.5,20.4 Q14.5,21 16.4,17.9 Q18,15 17.3,12.6 Q16.5,10 15.8,7.6 Q15.6,4.8 17.6,4.6 L20.8,4.4" fill="none" stroke="#2f5f6c" stroke-width="1.4" stroke-linecap="round"/></g>
<path d="M34.9,273.6 L40.1,273.6 L37.5,276.6Z" fill="#4a4a4a"/>
<rect x="5" y="290" width="40" height="1" fill="#9c9c9c"/>
<g transform="translate(2,294)"><rect x="1.3" y="2.2" width="26.3" height="25.1" fill="#e4e4e4" stroke="#7c7c7c" stroke-width="1.1"/><defs><linearGradient id="rulg" x1="0" y1="0" x2="1" y2="0"><stop offset="0" stop-color="#fbf3c0"/><stop offset="1" stop-color="#f4d84a"/></linearGradient></defs><path d="M8.2,6.5 L22.7,13.5 L22.7,18.5 L8.2,11.5Z" fill="url(#rulg)"/><path d="M8.2,11.8 L8.2,6.5 L22.7,13.5 L22.7,18.5" fill="none" stroke="#1a1500" stroke-width="1.3"/><path d="M11.5,8.1 L11.5,10 M14.8,9.7 L14.8,11.6 M18.5,11.5 L18.5,14" stroke="#1a1500" stroke-width="1.1"/><path d="M5.2,14 L18,20.6" stroke="#2a6685" stroke-width="2.4" stroke-linecap="round"/><path d="M23.2,23.6 L14.6,23.7 L17.9,17.3Z" fill="#22556f"/></g>
<rect x="0" y="329" width="48" height="1" fill="#8e8e8e"/>
<rect x="48" y="0" width="1" height="536" fill="#8e8e8e"/>
<g transform="translate(52,4)"><g fill="#f3f3f3" stroke="#cbcbcb" stroke-width="1.2" stroke-linejoin="round"><path d="M2,12 L2,24 L17,24 L20,14 L6,14 L5,12Z"/><path d="M2,12 L2,9 L6,9 L7,10.5 L12,10.5"/><rect x="13" y="3.5" width="8" height="8" rx="1"/><path d="M14.5,6 L19.5,6 M17,6 L17,10"/><path d="M5,7 L9,3.5 L9,6"/></g></g>
<path d="M83.9,15.1 L89.1,15.1 L86.5,18.1Z" fill="#4a4a4a"/>
<g transform="translate(52,31)"><path d="M7,11 L15,22 Q18,25.5 20.5,22.5 Q23,19.5 20,15.5 L11.5,4.5 Q9,2 6.5,4 Q4,6 6.5,9 L14,18.5" fill="none" stroke="#cbcbcb" stroke-width="1.5"/></g>
<g transform="translate(52,58)"><g fill="#f3f3f3" stroke="#cbcbcb" stroke-width="1.1"><path d="M5,3 L8,3 L8,5.5 L11,5.5 L11,10 L5,10Z"/><path d="M5,12 L8,12 L8,14.5 L11,14.5 L11,19 L5,19Z"/><path d="M14,3 L17,3 L17,5.5 L20,5.5 L20,10 L14,10Z"/><path d="M14,12 L17,12 L17,14.5 L20,14.5 L20,19 L14,19Z"/></g></g>
<path d="M83.9,67.1 L89.1,67.1 L86.5,70.1Z" fill="#4a4a4a"/>
<g transform="translate(52,83)"><g fill="#f3f3f3" stroke="#cbcbcb" stroke-width="1.2" stroke-linejoin="round"><path d="M3,7 L8,7 L9,5 L19,5 L19,21 L3,21Z"/><path d="M7,18 L17,8 L20,10 L10,20Z"/><path d="M3,11 L19,11" /></g></g>
<g transform="translate(52,110)"><g fill="#f3f3f3" stroke="#cbcbcb" stroke-width="1.2" stroke-linejoin="round"><path d="M3,6 L9,3 L20,5 L20,17 L13,20 L3,18Z"/><path d="M3,6 L13,8.5 L13,20 M13,8.5 L20,5"/><path d="M6,14 L16,11 M13.5,8.5 L17,11 L14,14"/></g></g>
<path d="M83.9,119.1 L89.1,119.1 L86.5,122.1Z" fill="#4a4a4a"/>
<rect x="54" y="136" width="40" height="1" fill="#9c9c9c"/>
<g transform="translate(52,143)"><g fill="#f3f3f3" stroke="#cbcbcb" stroke-width="1.2" stroke-linejoin="round"><path d="M3,12 L9,10 L9,21 L3,22Z"/><path d="M9,10 L16,12 L16,21 L9,22"/><path d="M14,9 Q17,4 21,8 Q19,12 16,12"/><path d="M5,7 Q7,3 11,5 L9,8"/></g></g>
<rect x="54" y="170" width="40" height="1" fill="#9c9c9c"/>
<g transform="translate(52,177)"><path d="M5.3,5.3 L15,3.5 L20.8,5.3 L20.8,17.5 L8.5,20.5 L5.3,18.5Z" fill="#eeeeee" stroke="#1c1c1c" stroke-width="1.2" stroke-linejoin="round"/><path d="M5.3,5.3 L8.5,7 L20.8,5.3 M8.5,7 L8.5,20.5" fill="none" stroke="#999" stroke-width="0.9"/><path d="M10.3,6.3 L18.8,6 L18.8,9.5 L16.5,9.5 L16.5,18 L13,18.5 L13,10 L10.3,10.5Z" fill="#4ea6d8" stroke="#0f3a58" stroke-width="1.1" stroke-linejoin="round"/></g>
<path d="M83.9,187.1 L89.1,187.1 L86.5,190.1Z" fill="#4a4a4a"/>
<g transform="translate(52,202)"><circle cx="6" cy="6.8" r="2.6" fill="#86c6e8" stroke="#0f3a58" stroke-width="1.3"/><path d="M10.5,9.3 L20.8,6.3 L20.8,16.5 L10.5,21.5Z" fill="#6ab4de" stroke="#0f3a58" stroke-width="1.2" stroke-linejoin="round"/><path d="M15.3,5 L15.3,22" stroke="#111" stroke-width="1.3" stroke-dasharray="1.6,1.1"/></g>
<path d="M83.9,213.1 L89.1,213.1 L86.5,216.1Z" fill="#4a4a4a"/>
<rect x="54" y="230" width="40" height="1" fill="#9c9c9c"/>
<g transform="translate(52,236)"><path d="M23.10,10.30 L23.02,11.33 L21.64,11.97 L21.31,12.75 L21.84,14.18 L21.17,14.97 L19.67,14.67 L18.95,15.11 L18.54,16.58 L17.53,16.82 L16.50,15.70 L15.66,15.63 L14.46,16.58 L13.50,16.18 L13.33,14.67 L12.68,14.12 L11.16,14.18 L10.62,13.30 L11.36,11.97 L11.17,11.14 L9.90,10.30 L9.98,9.27 L11.36,8.63 L11.69,7.85 L11.16,6.42 L11.83,5.63 L13.33,5.93 L14.05,5.49 L14.46,4.02 L15.47,3.78 L16.50,4.90 L17.34,4.97 L18.54,4.02 L19.50,4.42 L19.67,5.93 L20.32,6.48 L21.84,6.42 L22.38,7.30 L21.64,8.63 L21.83,9.46Z" fill="#fff" stroke="#1c1c1c" stroke-width="1.2"/><circle cx="16.5" cy="10.3" r="2.1" fill="#fff" stroke="#1c1c1c" stroke-width="1.2"/><path d="M15.10,17.50 L15.01,18.47 L13.82,19.07 L13.48,19.80 L13.79,21.10 L13.10,21.79 L11.80,21.48 L11.07,21.82 L10.47,23.01 L9.50,23.10 L8.70,22.03 L7.93,21.82 L6.70,22.35 L5.90,21.79 L5.98,20.46 L5.52,19.80 L4.24,19.42 L3.99,18.47 L4.90,17.50 L4.97,16.70 L4.24,15.58 L4.65,14.70 L5.98,14.54 L6.54,13.98 L6.70,12.65 L7.58,12.24 L8.70,12.97 L9.50,12.90 L10.47,11.99 L11.42,12.24 L11.80,13.52 L12.46,13.98 L13.79,13.90 L14.35,14.70 L13.82,15.93 L14.03,16.70Z" fill="#b9b9b9" stroke="#333" stroke-width="1"/><circle cx="9.5" cy="17.5" r="1.4" fill="#fff" stroke="#111" stroke-width="1"/><circle cx="7.5" cy="7.5" r="2" fill="#f0a830"/><path d="M7.5,3.8 L7.5,11.2 M3.8,7.5 L11.2,7.5 M4.9,4.9 L10.1,10.1 M10.1,4.9 L4.9,10.1" stroke="#8a5a10" stroke-width="1.1" stroke-dasharray="1.3,1.2"/></g>
<rect x="54" y="264" width="40" height="1" fill="#9c9c9c"/>
<g transform="translate(52,270)"><rect x="4.3" y="4.3" width="12.7" height="11.2" fill="#fff" stroke="#1a2a38" stroke-width="1.2"/><rect x="4.9" y="4.9" width="11.5" height="2" fill="#3a78a8"/><path d="M5,5.9 L16.4,5.9" stroke="#8fc4e6" stroke-width="0.8"/><path d="M4.3,10 L17,10 M4.3,13 L17,13 M8.5,7 L8.5,15.5 M12.7,7 L12.7,15.5" stroke="#777" stroke-width="0.9"/><path d="M11,12.5 L13.5,11 L16,11.3 L21.8,11 L21.8,19 L18,21.5 L10.5,17Z" fill="#f3cf38" stroke="#2a1e00" stroke-width="1.1" stroke-linejoin="round"/><path d="M16,10 L19,9 L21.8,10.5 L21.8,15.5 L16,16.5Z" fill="#7cc0e6" stroke="#0f3a58" stroke-width="1.1"/><path d="M10.5,17 L18,18.5 L21.8,16.5 M18,18.5 L18,21.5" fill="none" stroke="#2a1e00" stroke-width="0.9"/></g>
<rect x="54" y="298" width="40" height="1" fill="#9c9c9c"/>
<g transform="translate(52,304)"><path d="M4.2,13.5 L7,12 L8.5,11 L12,11 L12.5,14.5 L15,16 L15,20 L11.5,22 L4.2,16.5Z" fill="#f3cf38" stroke="#2a1e00" stroke-width="1.2" stroke-linejoin="round"/><path d="M8.5,11 L9.5,14.5 L15,16 M9.5,14.5 L11.5,22" fill="none" stroke="#2a1e00" stroke-width="0.8"/><path d="M15.5,5.5 L18.5,4.5 L22,5.3 L22,8.8 L18.5,9.8 L15.5,8.8Z" fill="#7cc0e6" stroke="#0f3a58" stroke-width="1.2"/><path d="M19.5,10 L19.5,14.3 L10,14.3" fill="none" stroke="#111" stroke-width="1.3" stroke-dasharray="1.7,1.2"/></g>
<g transform="translate(52,330)"><g fill="#f3f3f3" stroke="#cbcbcb" stroke-width="1.1" stroke-linejoin="round"><path d="M4.2,13.5 L7,12 L8.5,11 L12,11 L12.5,14.5 L15,16 L15,20 L11.5,22 L4.2,16.5Z"/><path d="M15.5,5.5 L18.5,4.5 L22,5.3 L22,8.8 L18.5,9.8 L15.5,8.8Z"/><path d="M19.5,10 L19.5,14.3 L12,15.5" fill="none" stroke-dasharray="1.7,1.2"/></g></g>
<rect x="54" y="358" width="40" height="1" fill="#9c9c9c"/>
<g transform="translate(52,364)"><path d="M4.3,5.3 L11,5.3 L12.8,7 L12.8,14.5 L6.5,14.5 L4.3,12.5Z" fill="#f0d048" stroke="#2a1e00" stroke-width="1.2" stroke-linejoin="round"/><path d="M6.5,7 L12.8,7 M6.5,7 L6.5,14.5 M4.3,5.3 L6.5,7" fill="none" stroke="#2a1e00" stroke-width="0.9"/><path d="M12.5,11.5 L19,11.5 L21,13.3 L21,21 L14.5,21 L12.5,19Z" fill="#a8dcf4" stroke="#0f3a58" stroke-width="1.2" stroke-linejoin="round"/><path d="M14.5,13.3 L21,13.3 M14.5,13.3 L14.5,21 M12.5,11.5 L14.5,13.3" fill="none" stroke="#0f3a58" stroke-width="0.9"/><path d="M14.5,4.3 L14.5,7.5 M18.3,9.5 L21.8,9.5 M4.3,16.5 L7.8,16.5 M10.5,19.5 L10.5,21.8" stroke="#c04a30" stroke-width="1.2"/><path d="M16.3,8.5 L19.8,5.3 M6.3,20.8 L9.5,17" stroke="#a04030" stroke-width="1" stroke-dasharray="1.2,0.9"/></g>
<g transform="translate(52,390)"><g fill="#f3f3f3" stroke="#cbcbcb" stroke-width="1.1"><path d="M4,3 L16,3 L16,7 L12,7 L12,9.5 L8,9.5 L8,7 L4,7Z"/><path d="M4,21 L16,21 L16,17 L12,17 L12,14.5 L8,14.5 L8,17 L4,17Z"/><path d="M19.5,4 L19.5,10 M17.5,8.5 L19.5,10.5 L21.5,8.5 M19.5,20 L19.5,14 M17.5,15.5 L19.5,13.5 L21.5,15.5" fill="none"/></g></g>
<g transform="translate(52,416)"><g fill="#f3f3f3" stroke="#cbcbcb" stroke-width="1.1" stroke-linejoin="round"><path d="M4,5 L12,3 L20,5 L20,19 L12,22 L4,20Z"/><path d="M12,3 L12,22 M4,12 L20,12 M8,4 L8,21 M16,4 L16,20.5" fill="none"/></g></g>
<g transform="translate(52,443)"><g fill="#f3f3f3" stroke="#cbcbcb" stroke-width="1.1" stroke-linejoin="round"><path d="M8,6 L14,3 L20,6 L20,18 L14,21 L8,18Z"/><path d="M8,6 L14,9 L20,6 M14,9 L14,21 M8,12 L14,15 L20,12" fill="none"/><rect x="3.5" y="13" width="7" height="9"/><path d="M5,16 L9,16 M5,18.5 L9,18.5" fill="none"/></g></g>
<g transform="translate(52,469)"><g fill="#f3f3f3" stroke="#cbcbcb" stroke-width="1.2"><rect x="4" y="3" width="8.5" height="18" rx="4.2"/><circle cx="14.5" cy="15" r="6"/><path d="M14.5,11.5 L14.5,15 L17,16.5 M18,7 L21,9 L19,11" fill="none"/></g></g>
<rect x="54" y="496" width="40" height="1" fill="#9c9c9c"/>
<g transform="translate(50,500)"><rect x="1.3" y="2.2" width="26.3" height="25.1" fill="#e4e4e4" stroke="#7c7c7c" stroke-width="1.1"/><defs><linearGradient id="rulg" x1="0" y1="0" x2="1" y2="0"><stop offset="0" stop-color="#fbf3c0"/><stop offset="1" stop-color="#f4d84a"/></linearGradient></defs><path d="M8.2,6.5 L22.7,13.5 L22.7,18.5 L8.2,11.5Z" fill="url(#rulg)"/><path d="M8.2,11.8 L8.2,6.5 L22.7,13.5 L22.7,18.5" fill="none" stroke="#1a1500" stroke-width="1.3"/><path d="M11.5,8.1 L11.5,10 M14.8,9.7 L14.8,11.6 M18.5,11.5 L18.5,14" stroke="#1a1500" stroke-width="1.1"/><path d="M5.2,14 L18,20.6" stroke="#2a6685" stroke-width="2.4" stroke-linecap="round"/><path d="M23.2,23.6 L14.6,23.7 L17.9,17.3Z" fill="#22556f"/></g>
<rect x="48" y="535" width="48" height="1" fill="#8e8e8e"/>
<rect x="97" y="0" width="228" height="40" fill="#f7f7f7"/>
<circle cx="209" cy="3" r="2.6" fill="#c8c8c8" stroke="#8a8a8a" stroke-width="0.8"/>
<rect x="96" y="10" width="227" height="1" fill="#c4c4c4"/>
<rect x="98" y="15" width="225" height="1" fill="#7f7f7f"/>
<rect x="138" y="16" width="140" height="24" fill="#d9d9d9"/>
<rect x="137" y="16" width="1" height="24" fill="#8f8f8f"/>
<rect x="177" y="16" width="1" height="24" fill="#8f8f8f"/>
<rect x="217" y="16" width="1" height="24" fill="#8f8f8f"/>
<rect x="257" y="16" width="1" height="24" fill="#8f8f8f"/>
<rect x="138" y="39.5" width="185" height="1" fill="#8a8a8a"/>
<g transform="translate(106,16) scale(1.0)"><path d="M4.3,8.3 L6.8,7.6 L7.5,5.4 L12,3.5 L16.6,4.8 L16.6,10.3 L20.6,11.3 L20.6,17.6 L15.6,20.6 L4.3,13.5 Z" fill="#f6d23a" stroke="#2a1e00" stroke-width="1.2" stroke-linejoin="round"/><path d="M7.5,5.4 L12,3.5 L16.6,4.8 L11.6,6.5Z M11.6,11.8 L16.6,10.3 L20.6,11.3 L15.6,13.6Z" fill="#fbe58a"/><path d="M7.5,5.4 L11.6,6.5 L16.6,4.8 M11.6,6.5 L11.6,11.8 L15.6,13.6 L20.6,11.3 M15.6,13.6 L15.6,20.6 M11.6,11.8 L16.6,10.3" fill="none" stroke="#2a1e00" stroke-width="1"/></g>
<g transform="translate(149.5,19)"><rect x="0.5" y="0.5" width="16" height="17" rx="1.5" fill="#fff" stroke="#1d3b55" stroke-width="1"/><rect x="1" y="1" width="15" height="3" fill="#4ea3d8"/><rect x="2.5" y="6" width="3.5" height="2.2" fill="#2a6a98"/><rect x="2.5" y="9.6" width="3.5" height="2.2" fill="#2a6a98"/><rect x="2.5" y="13.2" width="3.5" height="2.2" fill="#2a6a98"/><path d="M7.5,7.1 L14.5,7.1 M7.5,10.7 L14.5,10.7 M7.5,14.3 L14.5,14.3" stroke="#222" stroke-width="1"/></g>
<g transform="translate(190.5,19)" fill="#fff" stroke="#222" stroke-width="1.1"><path d="M1,1 L1,17 M1,8 L4,8 M1,16 L4,16" fill="none"/><rect x="1" y="0.5" width="3" height="3"/><rect x="5" y="4" width="5" height="5"/><rect x="9" y="11" width="5.5" height="6"/><path d="M4,2 L7,2 L7,4" fill="none"/></g>
<g stroke="#222" fill="none"><circle cx="238" cy="27.7" r="5.6" stroke-width="1.8"/><path d="M238,19.5 L238,36 M229.8,27.7 L246.2,27.7" stroke-width="1.6"/></g>
<defs><clipPath id="ballc"><rect x="258" y="16" width="20.5" height="24"/></clipPath></defs>
<defs><clipPath id="ballc2"><circle cx="278" cy="26.8" r="9"/></clipPath></defs>
<g clip-path="url(#ballc)"><g clip-path="url(#ballc2)"><rect x="268" y="17" width="6" height="10" fill="#3f7fd8"/><rect x="274" y="17" width="6" height="10" fill="#e0302a"/><rect x="268" y="27" width="6" height="10" fill="#3aa84a"/><rect x="274" y="27" width="6" height="10" fill="#f2c22a"/></g><circle cx="278" cy="26.8" r="8.6" fill="none" stroke="#555" stroke-width="0.8" stroke-opacity="0.6"/></g>
<rect x="278.5" y="18.5" width="23" height="22" fill="#fbfbfb" stroke="#e2e2e2" stroke-width="1"/>
<rect x="302" y="16" width="21" height="24" fill="#f7f7f7"/>
<path d="M288.5,27.8 L292.3,25 L292.3,30.6Z" fill="#222"/>
<path d="M309.7,22.7 L314.3,27.4 L309.7,32.1" fill="none" stroke="#222" stroke-width="1.9"/>
<rect x="101.5" y="41.5" width="218" height="25" fill="#f3f3f3" stroke="#c9c9c9" stroke-width="1"/>
<g transform="translate(104,45)"><path d="M0.5,1.5 Q8.5,-0.5 16.5,1.5 L16.5,3.5 L10,11 L10,18 L7,18 L7,11 L0.5,3.5Z" fill="#e8f3fa" stroke="#222" stroke-width="1"/><path d="M1,1.6 Q8.5,0 16,1.6 L16,3.3 Q8.5,2 1,3.3Z" fill="#3d8fc4"/></g>
<rect x="96" y="40" width="1" height="779" fill="#a8a8a8"/>
<defs><clipPath id="treec"><rect x="97" y="40" width="226" height="779"/></clipPath></defs><g clip-path="url(#treec)">
<g transform="translate(97,66) scale(1.0)"><path d="M4.3,8.3 L6.8,7.6 L7.5,5.4 L12,3.5 L16.6,4.8 L16.6,10.3 L20.6,11.3 L20.6,17.6 L15.6,20.6 L4.3,13.5 Z" fill="#f6d23a" stroke="#2a1e00" stroke-width="1.2" stroke-linejoin="round"/><path d="M7.5,5.4 L12,3.5 L16.6,4.8 L11.6,6.5Z M11.6,11.8 L16.6,10.3 L20.6,11.3 L15.6,13.6Z" fill="#fbe58a"/><path d="M7.5,5.4 L11.6,6.5 L16.6,4.8 M11.6,6.5 L11.6,11.8 L15.6,13.6 L20.6,11.3 M15.6,13.6 L15.6,20.6 M11.6,11.8 L16.6,10.3" fill="none" stroke="#2a1e00" stroke-width="1"/></g>
<text x="123.5" y="82.7" font-family="Liberation Sans" font-size="12" fill="#000" textLength="199.5" lengthAdjust="spacingAndGlyphs">WHEEL SPACER 6X139.7 M12&#160; (Default</text>
<path d="M106,96.80000000000001 L110.4,100.4 L106,104.0Z" fill="#5a5a5a"/>
<g transform="translate(123,91.4)"><path d="M0.5,16.5 L0.5,1.5 Q0.5,0.5 1.5,0.5 L6,0.5 L7.5,2.5 L16.5,2.5 Q17.5,2.5 17.5,3.5 L17.5,16.5 Z" fill="#e2e2e2" stroke="#2a2a2a" stroke-width="1.2"/><path d="M0.5,4.5 L17.5,4.5" stroke="#2a2a2a" stroke-width="0.9"/><rect x="1.5" y="5" width="15" height="11" fill="#f4f4f4"/><circle cx="10" cy="10.5" r="4.2" fill="#fff" stroke="#333" stroke-width="1"/><path d="M10,8 L10,10.5 L12,11.5" stroke="#333" fill="none" stroke-width="0.8"/><path d="M3,11 Q4,6 8,7" stroke="#2f7fc0" stroke-width="2" fill="none"/><path d="M2,9.5 L4.5,13 L6,9.5Z" fill="#2f7fc0"/></g>
<text x="146" y="104.7" font-family="Liberation Sans" font-size="12" fill="#000" textLength="37.7" lengthAdjust="spacingAndGlyphs">History</text>
<g transform="translate(123,113.4)"><path d="M0.5,16.5 L0.5,1.5 Q0.5,0.5 1.5,0.5 L6,0.5 L7.5,2.5 L16.5,2.5 Q17.5,2.5 17.5,3.5 L17.5,16.5 Z" fill="#e2e2e2" stroke="#2a2a2a" stroke-width="1.2"/><path d="M0.5,4.5 L17.5,4.5" stroke="#2a2a2a" stroke-width="0.9"/><rect x="1.5" y="5" width="15" height="11" fill="#f4f4f4"/><circle cx="9" cy="10.5" r="4.6" fill="#fff" stroke="#222" stroke-width="1.5"/><path d="M9,10.5 L13.4,11.5 A4.6,4.6 0 0 1 10,15 Z" fill="#d8431f"/><path d="M9,10.5 L11.8,7.5 M6,8.5 L8,10" stroke="#222" stroke-width="1"/></g>
<text x="146" y="126.7" font-family="Liberation Sans" font-size="12" fill="#000" textLength="40.1" lengthAdjust="spacingAndGlyphs">Sensors</text>
<path d="M106,140.79999999999998 L110.4,144.39999999999998 L106,147.99999999999997Z" fill="#5a5a5a"/>
<g transform="translate(123,135.39999999999998)"><path d="M0.5,16.5 L0.5,1.5 Q0.5,0.5 1.5,0.5 L6,0.5 L7.5,2.5 L16.5,2.5 Q17.5,2.5 17.5,3.5 L17.5,16.5 Z" fill="#e2e2e2" stroke="#2a2a2a" stroke-width="1.2"/><path d="M0.5,4.5 L17.5,4.5" stroke="#2a2a2a" stroke-width="0.9"/><rect x="1.5" y="5" width="15" height="11" fill="#f4f4f4"/><text x="3.6" y="15.8" font-family="Liberation Serif" font-size="13.5" font-weight="bold" fill="#3a7fb0">A</text></g>
<text x="146" y="148.7" font-family="Liberation Sans" font-size="12" fill="#000" textLength="65.4" lengthAdjust="spacingAndGlyphs">Annotations</text>
<path d="M106,162.79999999999998 L110.4,166.39999999999998 L106,169.99999999999997Z" fill="#5a5a5a"/>
<g transform="translate(123,157.39999999999998)"><path d="M0.5,16.5 L0.5,1.5 Q0.5,0.5 1.5,0.5 L6,0.5 L7.5,2.5 L16.5,2.5 Q17.5,2.5 17.5,3.5 L17.5,16.5 Z" fill="#e2e2e2" stroke="#2a2a2a" stroke-width="1.2"/><path d="M0.5,4.5 L17.5,4.5" stroke="#2a2a2a" stroke-width="0.9"/><rect x="1.5" y="5" width="15" height="11" fill="#f4f4f4"/><path d="M5.5,8 L9,6.5 L12.5,8 L12.5,12.5 L9,14.5 L5.5,12.5Z" fill="#3d8fc4" stroke="#1d3b55" stroke-width="0.9"/><path d="M5.5,8 L9,9.5 L12.5,8 M9,9.5 L9,14.5" stroke="#1d3b55" stroke-width="0.7" fill="none"/></g>
<text x="146" y="170.7" font-family="Liberation Sans" font-size="12" fill="#000" textLength="77.6" lengthAdjust="spacingAndGlyphs">Solid Bodies(1)</text>
<g transform="translate(122,179.39999999999998)"><circle cx="2.5" cy="3" r="1.9" fill="#fff" stroke="#555" stroke-width="0.8"/><path d="M6,3 L18,3" stroke="#222" stroke-width="1.6"/><circle cx="2.5" cy="9" r="1.9" fill="#7ab8e8" stroke="#555" stroke-width="0.8"/><path d="M6,9 L18,9" stroke="#222" stroke-width="1.6"/><circle cx="2.5" cy="15" r="1.9" fill="#f0c030" stroke="#555" stroke-width="0.8"/><path d="M6,15 L11,15" stroke="#222" stroke-width="1.6"/><circle cx="15" cy="15" r="3" fill="#222" stroke="#222" stroke-width="1.6" stroke-dasharray="1.3,0.9"/><circle cx="15" cy="15" r="1" fill="#fff"/></g>
<text x="146" y="192.7" font-family="Liberation Sans" font-size="12" fill="#000" textLength="97.2" lengthAdjust="spacingAndGlyphs">Plain Carbon Steel</text>
<g transform="translate(125.5,200.39999999999998)" fill="none" stroke="#222" stroke-width="1.1"><path d="M1,4.3 L13.3,1 L13.3,14.5 L1,17.8Z" stroke-linejoin="round"/><path d="M7,-0.6 L7,18.4" stroke-dasharray="3.2,1.6" stroke-width="1.2"/></g>
<text x="146" y="214.7" font-family="Liberation Sans" font-size="12" fill="#000" textLength="61.2" lengthAdjust="spacingAndGlyphs">Front Plane</text>
<g transform="translate(125.5,222.39999999999998)" fill="none" stroke="#222" stroke-width="1.1"><path d="M1,4.3 L13.3,1 L13.3,14.5 L1,17.8Z" stroke-linejoin="round"/><path d="M7,-0.6 L7,18.4" stroke-dasharray="3.2,1.6" stroke-width="1.2"/></g>
<text x="146" y="236.7" font-family="Liberation Sans" font-size="12" fill="#000" textLength="53.2" lengthAdjust="spacingAndGlyphs">Top Plane</text>
<g transform="translate(125.5,244.39999999999998)" fill="none" stroke="#222" stroke-width="1.1"><path d="M1,4.3 L13.3,1 L13.3,14.5 L1,17.8Z" stroke-linejoin="round"/><path d="M7,-0.6 L7,18.4" stroke-dasharray="3.2,1.6" stroke-width="1.2"/></g>
<text x="146" y="258.7" font-family="Liberation Sans" font-size="12" fill="#000" textLength="61.3" lengthAdjust="spacingAndGlyphs">Right Plane</text>
<g transform="translate(125,267.4)"><path d="M2,4 L2,15.8 L15,15.8" fill="none" stroke="#111" stroke-width="2.2"/><rect x="0.5" y="14.3" width="3" height="3" fill="#111"/><path d="M2,0 L-1,5 L5,5Z M19,15.8 L14,12.8 L14,18.8Z" fill="#111"/></g>
<text x="146" y="280.7" font-family="Liberation Sans" font-size="12" fill="#000" textLength="32.6" lengthAdjust="spacingAndGlyphs">Origin</text>
<rect x="120.5" y="287.9" width="103" height="21" fill="#b9d5f0" stroke="#6f9fd6" stroke-width="1"/>
<path d="M106,294.79999999999995 L110.4,298.4 L106,302.0Z" fill="#5a5a5a"/>
<g transform="translate(119.5,284.59999999999997)"><path d="M9.3,10 L9.3,5.5 L14.5,4 L20.8,7 L20.8,20.3 L16.5,21.8 L12,19.3Z" fill="#fbfbfb" stroke="#1c1c1c" stroke-width="1.1" stroke-linejoin="round"/><path d="M9.3,5.5 L16.5,8.3 L20.8,7 M16.5,8.3 L16.5,21.8" fill="none" stroke="#555" stroke-width="0.9"/><path d="M3.3,9.3 L9,7.5 L14.5,10 L14.5,17.7 L8,19.8 L3.3,16.5Z" fill="#4ea6d8" stroke="#0f3a58" stroke-width="1.2" stroke-linejoin="round"/><path d="M3.3,9.3 L9,7.5 L14.5,10 L8,11.7Z" fill="#9ad3f0"/><path d="M3.3,9.3 L8,11.7 L14.5,10 M8,11.7 L8,19.8" fill="none" stroke="#0f3a58" stroke-width="1"/></g>
<text x="146" y="302.7" font-family="Liberation Sans" font-size="12" fill="#000" textLength="74.1" lengthAdjust="spacingAndGlyphs">Boss-Extrude1</text>
<path d="M106,316.79999999999995 L110.4,320.4 L106,324.0Z" fill="#5a5a5a"/>
<g transform="translate(119.5,307.09999999999997)"><path d="M3.3,8 L8.5,7 L15,7.5 L18.7,12 L18.8,19.8 L8,22.5 L3.3,18.8Z" fill="#efefef" stroke="#1c1c1c" stroke-width="1.2" stroke-linejoin="round"/><path d="M3.3,8 L8.5,10.3 L15,9 M8.5,10.3 L8.5,22.5" fill="none" stroke="#888" stroke-width="0.9"/><ellipse cx="13.5" cy="15" rx="3.3" ry="3.6" fill="#3f8fb8" stroke="#0f3a58" stroke-width="1"/><path d="M13.3,7.5 L20.5,13" stroke="#111" stroke-width="2.4"/><path d="M11.5,6.5 L13.5,5 L14.5,7.5Z" fill="#f0b030"/><circle cx="7.5" cy="6.5" r="1" fill="#c89020"/><circle cx="9.5" cy="4.5" r="0.7" fill="#333"/><circle cx="17.5" cy="5.3" r="1" fill="#c89020"/><circle cx="20.5" cy="7.3" r="0.7" fill="#333"/></g>
<text x="146" y="324.7" font-family="Liberation Sans" font-size="12" fill="#000" textLength="111.9" lengthAdjust="spacingAndGlyphs">M12 Clearance Hole1</text>
<path d="M124.5,351.4 L141,334.9" stroke="#2a6a98" stroke-width="1.6" stroke-dasharray="2.2,1.6"/>
<text x="146" y="346.7" font-family="Liberation Sans" font-size="12" fill="#000" textLength="26.2" lengthAdjust="spacingAndGlyphs">Axis1</text>
<g transform="translate(123,355.4)" stroke="#222" stroke-width="1" fill="#fff"><path d="M8,0.5 L13,0.5 L13,3 L11.5,3 L11.5,5 L9.5,5 L9.5,3 L8,3Z"/><path d="M8,18.5 L13,18.5 L13,16 L11.5,16 L11.5,14 L9.5,14 L9.5,16 L8,16Z"/><path d="M1,7 L4,7 L4,8.5 L6,8.5 L6,10.5 L4,10.5 L4,12 L1,12Z" fill="#4ba0d4"/><path d="M19.5,7 L16.5,7 L16.5,8.5 L14.5,8.5 L14.5,10.5 L16.5,10.5 L16.5,12 L19.5,12Z"/><path d="M6,9.5 L14.5,9.5 M10.5,5 L10.5,14" stroke-dasharray="1.5,1.2" fill="none"/></g>
<text x="146" y="368.7" font-family="Liberation Sans" font-size="12" fill="#000" textLength="58.5" lengthAdjust="spacingAndGlyphs">CirPattern1</text>
</g>
<rect x="97" y="375" width="226" height="3" fill="#3a8cc4"/>
<path d="M325.5,0 L325.5,578.5 L333.5,578.5 L333.5,616.5 L325.5,616.5 L325.5,819" fill="none" stroke="#7a7a7a" stroke-width="1"/>
<rect x="326" y="579" width="7" height="37" fill="#f7f7f7"/>
<circle cx="329" cy="597" r="2.6" fill="#d0d0d0" stroke="#8a8a8a" stroke-width="0.8"/>
</svg>
</body></html>
